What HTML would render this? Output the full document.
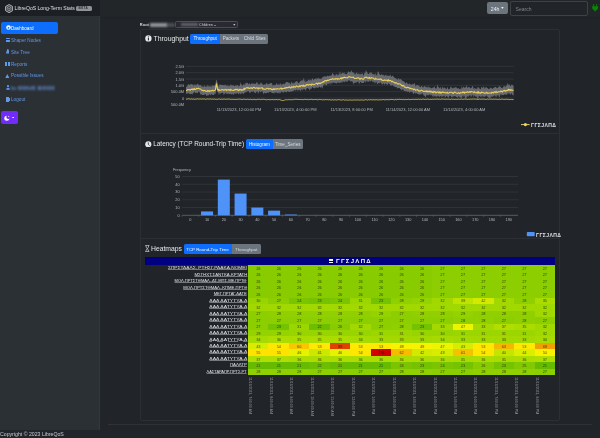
<!DOCTYPE html>
<html><head><meta charset="utf-8"><style>
html,body{margin:0;padding:0;width:600px;height:438px;overflow:hidden;background:#212529;font-family:"Liberation Sans", sans-serif;}
.t{position:absolute;white-space:nowrap;line-height:1.2;filter:blur(0.25px);}
.obf{letter-spacing:0.1px;}
</style></head><body>
<div style="position:absolute;left:0px;top:0px;width:100px;height:16px;background:#1c1f23;"></div>
<div style="position:absolute;left:0px;top:16px;width:99.6px;height:413.8px;background:#2b3035;"></div>
<div style="position:absolute;left:99.1px;top:16px;width:0.5px;height:413.8px;background:#33383d;"></div>
<svg style="position:absolute;left:4.8px;top:3.9px" width="8.2" height="9.2" viewBox="0 0 16 18"><path d="M8 1 L14.9 5 L14.9 13 L8 17 L1.1 13 L1.1 5 Z" fill="rgba(200,204,208,0.18)" stroke="#c4c8cc" stroke-width="1.7"/><path d="M8 4.5 L11.8 6.7 L11.8 11.1 L8 13.3 L4.2 11.1 L4.2 6.7 Z M8 9 L8 13.3 M8 9 L4.2 6.7 M8 9 L11.8 6.7" fill="none" stroke="#a8acb0" stroke-width="1.2"/></svg>
<div class="t " style="left:14.6px;top:5.14px;font-size:5.1px;color:#dee2e6;">LibreQoS Long-Term Stats</div>
<div style="position:absolute;left:76px;top:5.6px;width:16px;height:5.7px;background:#8e9399;border-radius:1.6px;"></div>
<div class="t " style="left:78.6px;top:6.69px;font-size:3.1px;color:#2b2f33;font-weight:bold;letter-spacing:0.35px;">BETA</div>
<div style="position:absolute;left:1px;top:21.5px;width:56.5px;height:12px;background:#0d6efd;border-radius:2px;"></div>
<svg style="position:absolute;left:5.5px;top:25px" width="5" height="5" viewBox="0 0 10 10"><circle cx="5" cy="5" r="4.6" fill="#fff"/><circle cx="5" cy="5.6" r="1.8" fill="#0d6efd"/></svg>
<div class="t " style="left:11px;top:25.64px;font-size:4.6px;color:#ffffff;">Dashboard</div>
<div class="t " style="left:11px;top:37.84px;font-size:4.6px;color:#6298e8;letter-spacing:0.04px;">Shaper Nodes</div>
<div class="t " style="left:11px;top:49.64px;font-size:4.6px;color:#6298e8;letter-spacing:0.04px;">Site Tree</div>
<div class="t " style="left:11px;top:61.54px;font-size:4.6px;color:#6298e8;letter-spacing:0.04px;">Reports</div>
<div class="t " style="left:11px;top:73.14px;font-size:4.6px;color:#6298e8;letter-spacing:0.04px;">Possible Issues</div>
<div class="t " style="left:11px;top:97.04px;font-size:4.6px;color:#6298e8;letter-spacing:0.04px;">Logout</div>
<div style="position:absolute;left:5.5px;top:37.6px;width:4.4px;height:1.7px;background:#6298e8;border-radius:0.3px;"></div>
<div style="position:absolute;left:5.5px;top:40.3px;width:4.4px;height:1.7px;background:#6298e8;border-radius:0.3px;"></div>
<svg style="position:absolute;left:5.8px;top:49.3px" width="3.7" height="4.5" viewBox="0 0 8 10"><path d="M4 0 Q5.5 0 6 3 L8 9 L8 10 L0 10 L0 9 L2 3 Q2.5 0 4 0 Z" fill="#6298e8"/></svg>
<div style="position:absolute;left:5.3px;top:61.9px;width:2.2px;height:3.7px;background:#6298e8;"></div>
<div style="position:absolute;left:7.8px;top:61.9px;width:2.2px;height:3.7px;background:#6298e8;"></div>
<svg style="position:absolute;left:5.3px;top:73.5px" width="4.6" height="4.6" viewBox="0 0 10 10"><path d="M5 0 L10 10 L0 10 Z" fill="#6298e8"/></svg>
<svg style="position:absolute;left:5.5px;top:85px" width="4" height="4.8" viewBox="0 0 8 10"><circle cx="4" cy="2.5" r="2.3" fill="#6298e8"/><path d="M0 10 Q0 5.5 4 5.5 Q8 5.5 8 10 Z" fill="#6298e8"/></svg>
<div class="t " style="left:10.8px;top:85.08px;font-size:5.2px;color:#6a9ae8;filter:blur(1.1px);font-weight:bold;letter-spacing:0.4px;">lo 6IIIhIII BIIIIIII</div>
<div style="position:absolute;left:5.5px;top:97px;width:3px;height:4.8px;background:#6298e8;"></div>
<div style="position:absolute;left:8.8px;top:97.8px;width:1.1px;height:3.4px;background:#6298e8;"></div>
<div style="position:absolute;left:0.5px;top:110.8px;width:17.5px;height:13.4px;background:#712cf9;border-radius:2px;"></div>
<svg style="position:absolute;left:4.2px;top:114.6px" width="6" height="6" viewBox="0 0 12 12"><circle cx="5.6" cy="6.4" r="5" fill="#fff"/><circle cx="8.6" cy="4.2" r="4" fill="#712cf9"/><path d="M9.4 1.2 L9.9 2.4 L11.1 2.6 L10.1 3.3 L10.4 4.5 L9.4 3.8 L8.4 4.5 L8.7 3.3 L7.7 2.6 L8.9 2.4 Z" fill="#fff" opacity="0.9"/></svg>
<svg style="position:absolute;left:12.1px;top:116.6px" width="2.2" height="1.7" viewBox="0 0 4 3"><path d="M0 0 L4 0 L2 3 Z" fill="#fff"/></svg>
<div class="t " style="left:0px;top:430.88px;font-size:5.2px;color:#c8ccd0;">Copyright © 2023 LibreQoS</div>
<div style="position:absolute;left:108px;top:423.7px;width:484px;height:0.6px;background:#2e3236;"></div>
<div style="position:absolute;left:100px;top:0px;width:500px;height:16.8px;background:#222629;"></div>
<div style="position:absolute;left:100px;top:16.6px;width:500px;height:1px;background:#1e2125;filter:blur(0.3px);"></div>
<div style="position:absolute;left:487px;top:2px;width:21px;height:12px;background:#6c757d;border-radius:2px;"></div>
<div class="t " style="left:490.8px;top:5.58px;font-size:5.2px;color:#eceef0;">24h</div>
<svg style="position:absolute;left:501.2px;top:7.4px" width="2.8" height="1.9" viewBox="0 0 4 3"><path d="M0 0 L4 0 L2 3 Z" fill="#f0f0f0"/></svg>
<div style="position:absolute;left:510px;top:0.8px;width:77.5px;height:14.9px;box-sizing:border-box;border:0.6px solid #3d4247;border-radius:2px;background:#212529"></div>
<div class="t " style="left:515.6px;top:5.90px;font-size:5.0px;color:#80868c;">Search</div>
<svg style="position:absolute;left:592px;top:3.8px" width="6.2" height="7.9" viewBox="0 0 12.4 15.8"><rect x="2.2" y="0" width="1.9" height="5" rx="0.9" fill="#008c00"/><rect x="8.3" y="0" width="1.9" height="5" rx="0.9" fill="#008c00"/><path d="M0.3 4.6 L12.1 4.6 L12.1 7.5 Q12.1 10.5 7.6 13 L6.2 15.8 L4.8 13 Q0.3 10.5 0.3 7.5 Z" fill="#008c00"/></svg>
<div class="t " style="left:139.8px;top:22.70px;font-size:4.0px;color:#d0d4d8;font-weight:bold;">Root</div>
<div style="position:absolute;left:150px;top:23.0px;width:17px;height:4.0px;background:#c0c4c8;filter:blur(0.9px);opacity:0.7;"></div>
<div style="position:absolute;left:166px;top:23.4px;width:9px;height:3.2px;background:#8a8e92;filter:blur(0.9px);opacity:0.4;"></div>
<div style="position:absolute;left:175px;top:21.1px;width:63.3px;height:6.9px;box-sizing:border-box;border:0.5px solid #4a4d55;border-radius:1.5px;background:#292833"></div>
<div style="position:absolute;left:181px;top:23.3px;width:17px;height:3.2px;background:#9a9ea2;filter:blur(0.9px);opacity:0.5;"></div>
<div class="t " style="left:199px;top:22.78px;font-size:3.7px;color:#d0d4d8;">Children --</div>
<svg style="position:absolute;left:233.4px;top:24.2px" width="2.6" height="1.7" viewBox="0 0 4 3"><path d="M0 0 L4 0 L2 3 Z" fill="#c8ccd0"/></svg>
<div style="position:absolute;left:139.6px;top:28.6px;width:420.6px;height:392.2px;box-sizing:border-box;border:1px solid #2c3034;border-radius:2px"></div>
<div style="position:absolute;left:140px;top:132.9px;width:420px;height:1px;background:#2c3034;"></div>
<div style="position:absolute;left:140px;top:238.1px;width:420px;height:1px;background:#2c3034;"></div>
<svg style="position:absolute;left:145px;top:34.8px" width="6.8" height="6.8" viewBox="0 0 12 12"><circle cx="6" cy="6" r="5.6" fill="#e6e8ea"/><rect x="5.1" y="5" width="1.8" height="4.5" fill="#212529"/><circle cx="6" cy="3.2" r="1" fill="#212529"/></svg>
<div class="t " style="left:153.5px;top:34.76px;font-size:6.9px;color:#e6e8ea;">Throughput</div>
<div style="position:absolute;left:190.3px;top:34px;width:29.7px;height:9.7px;background:#0d6efd;border-top-left-radius:1.5px;border-bottom-left-radius:1.5px;"></div>
<div class="t" style="left:155.15px;width:100px;top:36.34px;font-size:4.6px;color:#f4f6ff;text-align:center;font-weight:normal;">Throughput</div>
<div style="position:absolute;left:220.0px;top:34px;width:21.7px;height:9.7px;background:#6c757d;"></div>
<div class="t" style="left:180.85px;width:100px;top:36.34px;font-size:4.6px;color:#d8dadc;text-align:center;font-weight:normal;">Packets</div>
<div style="position:absolute;left:241.7px;top:34px;width:26px;height:9.7px;background:#6c757d;border-top-right-radius:1.5px;border-bottom-right-radius:1.5px;"></div>
<div class="t" style="left:204.7px;width:100px;top:36.34px;font-size:4.6px;color:#d8dadc;text-align:center;font-weight:normal;">Child Sites</div>
<div class="t" style="right:415.8px;top:65.00px;font-size:4.0px;color:#b4b8bc;text-align:right;">2.5G</div>
<div class="t" style="right:415.8px;top:71.30px;font-size:4.0px;color:#b4b8bc;text-align:right;">2.0G</div>
<div class="t" style="right:415.8px;top:77.60px;font-size:4.0px;color:#b4b8bc;text-align:right;">1.5G</div>
<div class="t" style="right:415.8px;top:83.90px;font-size:4.0px;color:#b4b8bc;text-align:right;">1.0G</div>
<div class="t" style="right:415.8px;top:90.20px;font-size:4.0px;color:#b4b8bc;text-align:right;">500.0M</div>
<div class="t" style="right:415.8px;top:96.60px;font-size:4.0px;color:#b4b8bc;text-align:right;">0</div>
<div class="t" style="right:415.8px;top:102.90px;font-size:4.0px;color:#b4b8bc;text-align:right;">500.0M</div>
<svg style="position:absolute;left:0;top:0" width="600" height="438">
<line x1="185.6" y1="66.4" x2="513.6" y2="66.4" stroke="#3a3e43" stroke-width="0.6"/>
<line x1="185.6" y1="72.7" x2="513.6" y2="72.7" stroke="#3a3e43" stroke-width="0.6"/>
<line x1="185.6" y1="79" x2="513.6" y2="79" stroke="#3a3e43" stroke-width="0.6"/>
<line x1="185.6" y1="85.3" x2="513.6" y2="85.3" stroke="#3a3e43" stroke-width="0.6"/>
<line x1="185.6" y1="91.6" x2="513.6" y2="91.6" stroke="#3a3e43" stroke-width="0.6"/>
<line x1="185.6" y1="98" x2="513.6" y2="98" stroke="#3a3e43" stroke-width="0.6"/>
<path d="M186.0,86.6 L186.7,87.0 L187.4,85.9 L188.1,84.0 L188.8,84.8 L189.5,84.5 L190.2,85.2 L190.9,83.7 L191.6,84.0 L192.3,84.9 L193.0,83.8 L193.7,86.2 L194.4,84.7 L195.1,84.1 L195.8,85.8 L196.5,85.0 L197.2,83.6 L197.9,84.4 L198.6,84.4 L199.3,85.3 L200.0,85.4 L200.7,84.8 L201.4,86.2 L202.1,86.5 L202.8,86.4 L203.5,87.1 L204.2,85.2 L204.9,86.6 L205.6,86.7 L206.3,85.9 L207.0,87.2 L207.7,84.7 L208.4,86.0 L209.1,87.1 L209.8,85.8 L210.5,86.1 L211.2,87.6 L211.9,85.6 L212.6,85.5 L213.3,85.4 L214.0,85.9 L214.7,85.5 L215.4,84.0 L216.1,80.6 L216.8,79.4 L217.5,86.0 L218.2,85.2 L218.9,87.1 L219.6,84.2 L220.3,84.7 L221.0,84.8 L221.7,85.0 L222.4,85.1 L223.1,85.1 L223.8,85.6 L224.5,85.3 L225.2,84.3 L225.9,86.0 L226.6,85.5 L227.3,85.9 L228.0,84.4 L228.7,86.7 L229.4,85.8 L230.1,86.2 L230.8,83.9 L231.5,85.4 L232.2,85.2 L232.9,85.7 L233.6,85.2 L234.3,86.2 L235.0,85.7 L235.7,85.7 L236.4,85.4 L237.1,85.4 L237.8,84.8 L238.5,86.8 L239.2,85.8 L239.9,86.0 L240.6,82.0 L241.3,84.6 L242.0,85.1 L242.7,86.1 L243.4,84.4 L244.1,83.2 L244.8,85.8 L245.5,83.2 L246.2,82.3 L246.9,83.8 L247.6,82.4 L248.3,84.1 L249.0,84.5 L249.7,82.7 L250.4,84.7 L251.1,84.0 L251.8,82.9 L252.5,83.6 L253.2,84.0 L253.9,83.3 L254.6,83.8 L255.3,84.0 L256.0,83.6 L256.7,82.0 L257.4,82.2 L258.1,85.3 L258.8,83.4 L259.5,84.4 L260.2,84.1 L260.9,82.1 L261.6,83.4 L262.3,83.5 L263.0,85.2 L263.7,84.8 L264.4,84.3 L265.1,85.0 L265.8,84.0 L266.5,82.7 L267.2,83.4 L267.9,84.7 L268.6,84.0 L269.3,83.9 L270.0,82.9 L270.7,83.3 L271.4,83.0 L272.1,83.5 L272.8,86.2 L273.5,84.8 L274.2,85.7 L274.9,84.4 L275.6,85.2 L276.3,83.7 L277.0,83.1 L277.7,85.5 L278.4,84.4 L279.1,83.6 L279.8,85.4 L280.5,82.9 L281.2,83.9 L281.9,85.7 L282.6,83.8 L283.3,84.0 L284.0,83.2 L284.7,84.5 L285.4,83.0 L286.1,81.9 L286.8,82.0 L287.5,82.3 L288.2,82.0 L288.9,83.4 L289.6,82.3 L290.3,84.4 L291.0,83.2 L291.7,81.2 L292.4,83.1 L293.1,84.0 L293.8,82.2 L294.5,83.2 L295.2,82.0 L295.9,81.5 L296.6,81.3 L297.3,80.9 L298.0,83.1 L298.7,83.3 L299.4,82.3 L300.1,81.5 L300.8,80.8 L301.5,80.4 L302.2,79.9 L302.9,81.1 L303.6,77.6 L304.3,82.0 L305.0,78.8 L305.7,82.4 L306.4,81.3 L307.1,81.3 L307.8,80.4 L308.5,79.5 L309.2,79.5 L309.9,81.0 L310.6,79.3 L311.3,81.1 L312.0,78.5 L312.7,78.6 L313.4,80.2 L314.1,79.3 L314.8,79.1 L315.5,78.3 L316.2,79.7 L316.9,77.5 L317.6,79.0 L318.3,77.6 L319.0,79.1 L319.7,78.5 L320.4,78.4 L321.1,79.5 L321.8,78.0 L322.5,77.2 L323.2,76.2 L323.9,77.4 L324.6,75.9 L325.3,76.5 L326.0,76.6 L326.7,76.7 L327.4,75.5 L328.1,75.9 L328.8,76.2 L329.5,75.7 L330.2,75.2 L330.9,75.9 L331.6,75.3 L332.3,72.9 L333.0,73.6 L333.7,74.8 L334.4,75.4 L335.1,76.0 L335.8,74.2 L336.5,73.8 L337.2,75.8 L337.9,73.9 L338.6,74.9 L339.3,74.1 L340.0,71.1 L340.7,74.7 L341.4,73.9 L342.1,72.7 L342.8,72.7 L343.5,73.5 L344.2,72.1 L344.9,74.3 L345.6,73.9 L346.3,74.2 L347.0,73.8 L347.7,72.6 L348.4,71.1 L349.1,72.4 L349.8,72.0 L350.5,72.3 L351.2,70.3 L351.9,71.6 L352.6,72.2 L353.3,72.8 L354.0,72.5 L354.7,74.2 L355.4,74.6 L356.1,73.0 L356.8,72.6 L357.5,74.0 L358.2,74.5 L358.9,73.1 L359.6,74.5 L360.3,73.7 L361.0,74.8 L361.7,73.5 L362.4,73.3 L363.1,74.7 L363.8,75.5 L364.5,72.4 L365.2,73.3 L365.9,70.0 L366.6,71.4 L367.3,72.6 L368.0,74.1 L368.7,74.3 L369.4,72.8 L370.1,73.5 L370.8,72.1 L371.5,72.5 L372.2,74.6 L372.9,73.4 L373.6,74.6 L374.3,73.7 L375.0,75.9 L375.7,72.7 L376.4,75.2 L377.1,75.6 L377.8,71.2 L378.5,71.8 L379.2,73.4 L379.9,74.8 L380.6,75.3 L381.3,74.3 L382.0,74.4 L382.7,75.1 L383.4,74.6 L384.1,76.6 L384.8,74.9 L385.5,74.8 L386.2,76.4 L386.9,74.3 L387.6,76.3 L388.3,75.8 L389.0,76.0 L389.7,75.6 L390.4,74.6 L391.1,76.9 L391.8,76.2 L392.5,75.4 L393.2,76.5 L393.9,76.8 L394.6,78.0 L395.3,78.3 L396.0,78.0 L396.7,79.2 L397.4,79.7 L398.1,79.0 L398.8,77.8 L399.5,79.8 L400.2,79.2 L400.9,78.8 L401.6,80.2 L402.3,80.4 L403.0,81.5 L403.7,81.1 L404.4,82.2 L405.1,82.5 L405.8,83.9 L406.5,82.0 L407.2,83.1 L407.9,84.2 L408.6,84.2 L409.3,83.0 L410.0,84.8 L410.7,83.9 L411.4,84.6 L412.1,84.9 L412.8,83.6 L413.5,84.4 L414.2,83.3 L414.9,83.6 L415.6,86.7 L416.3,85.4 L417.0,84.8 L417.7,85.5 L418.4,85.6 L419.1,85.7 L419.8,86.9 L420.5,87.2 L421.2,86.1 L421.9,86.1 L422.6,87.2 L423.3,87.6 L424.0,86.0 L424.7,86.2 L425.4,86.5 L426.1,87.8 L426.8,86.5 L427.5,87.8 L428.2,85.6 L428.9,88.2 L429.6,87.1 L430.3,87.5 L431.0,87.9 L431.7,88.4 L432.4,87.6 L433.1,88.1 L433.8,86.9 L434.5,86.3 L435.2,88.4 L435.9,88.3 L436.6,88.8 L437.3,84.1 L438.0,87.0 L438.7,87.1 L439.4,88.4 L440.1,87.2 L440.8,87.3 L441.5,89.6 L442.2,87.4 L442.9,86.4 L443.6,88.6 L444.3,87.7 L445.0,87.4 L445.7,88.7 L446.4,89.5 L447.1,87.2 L447.8,87.6 L448.5,89.5 L449.2,89.2 L449.9,88.5 L450.6,86.8 L451.3,86.6 L452.0,88.8 L452.7,88.1 L453.4,87.4 L454.1,88.4 L454.8,87.3 L455.5,87.3 L456.2,87.1 L456.9,88.3 L457.6,88.5 L458.3,88.0 L459.0,88.7 L459.7,89.0 L460.4,88.6 L461.1,89.5 L461.8,85.7 L462.5,88.4 L463.2,87.3 L463.9,86.6 L464.6,88.1 L465.3,87.3 L466.0,87.6 L466.7,84.7 L467.4,88.1 L468.1,87.6 L468.8,87.1 L469.5,87.1 L470.2,88.2 L470.9,88.1 L471.6,87.8 L472.3,85.9 L473.0,86.3 L473.7,89.2 L474.4,87.9 L475.1,88.4 L475.8,88.8 L476.5,89.2 L477.2,86.4 L477.9,88.7 L478.6,86.7 L479.3,87.9 L480.0,89.4 L480.7,89.1 L481.4,87.0 L482.1,86.9 L482.8,88.6 L483.5,86.4 L484.2,87.1 L484.9,89.1 L485.6,87.2 L486.3,86.8 L487.0,88.3 L487.7,88.1 L488.4,88.9 L489.1,89.1 L489.8,88.5 L490.5,87.6 L491.2,87.7 L491.9,88.5 L492.6,89.1 L493.3,87.7 L494.0,88.1 L494.7,86.8 L495.4,86.9 L496.1,87.1 L496.8,88.3 L497.5,88.0 L498.2,87.4 L498.9,86.3 L499.6,86.3 L500.3,86.4 L501.0,87.4 L501.7,88.0 L502.4,88.2 L503.1,86.8 L503.8,86.4 L504.5,85.7 L505.2,87.5 L505.9,85.8 L506.6,86.1 L507.3,82.6 L508.0,85.9 L508.7,83.9 L509.4,84.4 L510.1,86.1 L510.8,86.2 L511.5,84.5 L512.2,85.4 L512.9,84.7 L513.6,86.4 L513.6,95.4 L512.9,95.2 L512.2,94.5 L511.5,92.7 L510.8,95.1 L510.1,94.1 L509.4,93.6 L508.7,92.6 L508.0,94.9 L507.3,93.1 L506.6,94.7 L505.9,95.1 L505.2,94.3 L504.5,94.3 L503.8,95.2 L503.1,94.9 L502.4,94.7 L501.7,95.5 L501.0,93.9 L500.3,95.0 L499.6,97.5 L498.9,96.5 L498.2,94.8 L497.5,95.3 L496.8,97.4 L496.1,95.0 L495.4,97.0 L494.7,95.3 L494.0,95.5 L493.3,96.6 L492.6,96.9 L491.9,95.8 L491.2,96.9 L490.5,97.6 L489.8,97.9 L489.1,97.8 L488.4,97.5 L487.7,97.1 L487.0,95.9 L486.3,95.2 L485.6,96.6 L484.9,96.5 L484.2,96.7 L483.5,97.0 L482.8,95.2 L482.1,97.5 L481.4,96.0 L480.7,97.1 L480.0,96.5 L479.3,95.9 L478.6,96.2 L477.9,100.8 L477.2,96.7 L476.5,96.7 L475.8,96.2 L475.1,96.5 L474.4,95.1 L473.7,97.5 L473.0,94.8 L472.3,95.3 L471.6,97.1 L470.9,94.7 L470.2,96.9 L469.5,94.6 L468.8,96.9 L468.1,95.8 L467.4,96.4 L466.7,96.8 L466.0,98.8 L465.3,97.9 L464.6,96.6 L463.9,95.1 L463.2,97.2 L462.5,95.4 L461.8,97.5 L461.1,98.0 L460.4,97.5 L459.7,97.0 L459.0,96.5 L458.3,96.3 L457.6,98.0 L456.9,96.7 L456.2,97.0 L455.5,96.3 L454.8,96.0 L454.1,96.2 L453.4,96.6 L452.7,96.4 L452.0,97.6 L451.3,96.8 L450.6,95.6 L449.9,96.4 L449.2,95.8 L448.5,98.0 L447.8,96.7 L447.1,96.5 L446.4,95.8 L445.7,97.0 L445.0,97.6 L444.3,95.5 L443.6,95.8 L442.9,96.7 L442.2,96.3 L441.5,96.7 L440.8,96.3 L440.1,96.0 L439.4,96.9 L438.7,96.5 L438.0,95.5 L437.3,96.5 L436.6,96.8 L435.9,96.3 L435.2,96.4 L434.5,95.7 L433.8,97.2 L433.1,95.0 L432.4,96.8 L431.7,95.2 L431.0,94.2 L430.3,95.8 L429.6,94.1 L428.9,95.8 L428.2,94.8 L427.5,95.5 L426.8,94.2 L426.1,95.9 L425.4,97.7 L424.7,95.2 L424.0,96.3 L423.3,94.4 L422.6,93.6 L421.9,93.3 L421.2,94.8 L420.5,94.3 L419.8,94.2 L419.1,95.0 L418.4,94.0 L417.7,94.0 L417.0,93.4 L416.3,93.1 L415.6,93.7 L414.9,92.6 L414.2,92.9 L413.5,94.2 L412.8,93.3 L412.1,91.5 L411.4,91.9 L410.7,91.6 L410.0,92.6 L409.3,92.8 L408.6,91.1 L407.9,92.5 L407.2,91.2 L406.5,91.3 L405.8,91.5 L405.1,90.8 L404.4,90.9 L403.7,90.7 L403.0,88.9 L402.3,89.5 L401.6,90.4 L400.9,89.3 L400.2,88.9 L399.5,87.9 L398.8,88.0 L398.1,87.9 L397.4,88.8 L396.7,87.1 L396.0,87.3 L395.3,87.0 L394.6,86.9 L393.9,85.2 L393.2,86.4 L392.5,84.7 L391.8,85.5 L391.1,85.4 L390.4,85.2 L389.7,83.9 L389.0,84.1 L388.3,83.1 L387.6,84.9 L386.9,84.3 L386.2,84.5 L385.5,83.1 L384.8,84.8 L384.1,84.1 L383.4,83.2 L382.7,83.9 L382.0,84.8 L381.3,83.2 L380.6,82.3 L379.9,82.7 L379.2,83.4 L378.5,82.7 L377.8,84.0 L377.1,83.9 L376.4,81.8 L375.7,81.8 L375.0,84.0 L374.3,82.1 L373.6,81.5 L372.9,82.7 L372.2,81.1 L371.5,80.5 L370.8,81.0 L370.1,82.0 L369.4,80.5 L368.7,81.7 L368.0,82.1 L367.3,81.6 L366.6,80.2 L365.9,83.3 L365.2,81.3 L364.5,81.2 L363.8,83.1 L363.1,82.9 L362.4,82.9 L361.7,83.3 L361.0,82.1 L360.3,82.0 L359.6,83.6 L358.9,83.8 L358.2,80.9 L357.5,81.9 L356.8,82.1 L356.1,82.9 L355.4,82.3 L354.7,82.9 L354.0,82.8 L353.3,84.5 L352.6,81.8 L351.9,80.9 L351.2,81.6 L350.5,81.8 L349.8,80.0 L349.1,81.2 L348.4,79.7 L347.7,82.2 L347.0,80.6 L346.3,82.5 L345.6,80.6 L344.9,82.5 L344.2,81.8 L343.5,81.3 L342.8,83.0 L342.1,80.7 L341.4,83.1 L340.7,82.2 L340.0,83.3 L339.3,82.6 L338.6,82.9 L337.9,82.3 L337.2,82.7 L336.5,83.8 L335.8,82.8 L335.1,83.3 L334.4,82.7 L333.7,82.6 L333.0,82.4 L332.3,83.3 L331.6,82.6 L330.9,85.2 L330.2,82.3 L329.5,83.6 L328.8,83.9 L328.1,83.5 L327.4,83.8 L326.7,85.5 L326.0,85.5 L325.3,84.2 L324.6,84.1 L323.9,86.0 L323.2,84.5 L322.5,89.1 L321.8,86.7 L321.1,87.4 L320.4,87.7 L319.7,86.5 L319.0,87.3 L318.3,87.7 L317.6,87.6 L316.9,88.2 L316.2,87.3 L315.5,87.4 L314.8,88.8 L314.1,88.0 L313.4,88.1 L312.7,87.1 L312.0,88.1 L311.3,89.1 L310.6,88.2 L309.9,90.7 L309.2,89.3 L308.5,88.7 L307.8,88.0 L307.1,88.1 L306.4,88.9 L305.7,90.8 L305.0,89.4 L304.3,89.1 L303.6,88.7 L302.9,90.6 L302.2,89.8 L301.5,89.1 L300.8,91.3 L300.1,90.4 L299.4,89.4 L298.7,90.5 L298.0,89.8 L297.3,90.7 L296.6,88.9 L295.9,90.9 L295.2,90.1 L294.5,90.0 L293.8,90.5 L293.1,91.5 L292.4,91.0 L291.7,91.6 L291.0,91.8 L290.3,91.6 L289.6,91.7 L288.9,91.9 L288.2,91.6 L287.5,90.9 L286.8,92.4 L286.1,92.0 L285.4,92.2 L284.7,90.9 L284.0,92.4 L283.3,92.6 L282.6,92.2 L281.9,91.9 L281.2,91.3 L280.5,92.9 L279.8,93.7 L279.1,92.1 L278.4,92.9 L277.7,93.6 L277.0,92.4 L276.3,92.5 L275.6,92.7 L274.9,91.7 L274.2,94.0 L273.5,93.0 L272.8,93.1 L272.1,93.0 L271.4,92.6 L270.7,91.7 L270.0,92.2 L269.3,91.9 L268.6,93.3 L267.9,92.1 L267.2,92.9 L266.5,93.1 L265.8,93.3 L265.1,93.2 L264.4,92.6 L263.7,94.5 L263.0,92.7 L262.3,91.0 L261.6,91.1 L260.9,92.6 L260.2,91.7 L259.5,91.0 L258.8,92.2 L258.1,93.9 L257.4,91.3 L256.7,91.2 L256.0,92.6 L255.3,93.3 L254.6,92.7 L253.9,91.6 L253.2,91.2 L252.5,92.0 L251.8,91.1 L251.1,91.9 L250.4,92.7 L249.7,92.7 L249.0,92.0 L248.3,90.7 L247.6,91.7 L246.9,90.6 L246.2,92.8 L245.5,91.9 L244.8,92.9 L244.1,92.6 L243.4,94.7 L242.7,93.3 L242.0,92.5 L241.3,93.9 L240.6,94.4 L239.9,92.8 L239.2,93.8 L238.5,94.6 L237.8,93.1 L237.1,93.2 L236.4,93.7 L235.7,92.9 L235.0,94.5 L234.3,92.9 L233.6,94.7 L232.9,94.8 L232.2,93.3 L231.5,94.7 L230.8,93.8 L230.1,93.7 L229.4,94.2 L228.7,93.8 L228.0,93.6 L227.3,93.9 L226.6,94.0 L225.9,92.6 L225.2,93.5 L224.5,93.8 L223.8,95.2 L223.1,92.5 L222.4,92.9 L221.7,92.9 L221.0,93.1 L220.3,94.0 L219.6,93.0 L218.9,95.2 L218.2,92.3 L217.5,92.6 L216.8,87.1 L216.1,90.6 L215.4,94.4 L214.7,93.3 L214.0,94.9 L213.3,95.0 L212.6,94.7 L211.9,94.7 L211.2,93.7 L210.5,95.7 L209.8,93.7 L209.1,94.8 L208.4,95.6 L207.7,95.0 L207.0,95.9 L206.3,95.7 L205.6,94.2 L204.9,93.8 L204.2,95.2 L203.5,94.7 L202.8,94.9 L202.1,95.0 L201.4,93.9 L200.7,95.0 L200.0,92.9 L199.3,91.8 L198.6,91.0 L197.9,92.9 L197.2,93.3 L196.5,92.4 L195.8,92.8 L195.1,93.2 L194.4,91.6 L193.7,92.6 L193.0,93.5 L192.3,94.6 L191.6,93.8 L190.9,94.0 L190.2,94.3 L189.5,93.7 L188.8,93.7 L188.1,92.6 L187.4,93.8 L186.7,93.4 L186.0,94.2 Z" fill="#74777c" opacity="0.85"/>
<path d="M186.0,90.3 L186.7,90.4 L187.4,89.8 L188.1,89.6 L188.8,89.7 L189.5,89.6 L190.2,90.3 L190.9,89.5 L191.6,89.1 L192.3,89.7 L193.0,88.9 L193.7,89.6 L194.4,88.6 L195.1,89.5 L195.8,89.5 L196.5,88.3 L197.2,88.5 L197.9,88.7 L198.6,88.2 L199.3,88.7 L200.0,89.0 L200.7,89.0 L201.4,89.9 L202.1,90.5 L202.8,90.3 L203.5,91.0 L204.2,90.3 L204.9,90.5 L205.6,91.2 L206.3,91.2 L207.0,91.5 L207.7,90.4 L208.4,90.7 L209.1,91.6 L209.8,90.6 L210.5,90.9 L211.2,90.9 L211.9,90.8 L212.6,90.2 L213.3,91.1 L214.0,90.6 L214.7,90.2 L215.4,89.9 L216.1,85.6 L216.8,84.0 L217.5,89.8 L218.2,89.3 L218.9,90.7 L219.6,89.9 L220.3,90.3 L221.0,90.2 L221.7,89.8 L222.4,89.5 L223.1,89.7 L223.8,90.3 L224.5,89.9 L225.2,89.8 L225.9,89.5 L226.6,90.5 L227.3,89.9 L228.0,89.7 L228.7,90.0 L229.4,89.7 L230.1,90.5 L230.8,89.4 L231.5,90.0 L232.2,90.3 L232.9,90.5 L233.6,90.4 L234.3,89.7 L235.0,90.0 L235.7,89.4 L236.4,89.4 L237.1,90.0 L237.8,89.3 L238.5,90.6 L239.2,90.4 L239.9,89.3 L240.6,89.7 L241.3,90.2 L242.0,89.5 L242.7,90.1 L243.4,89.8 L244.1,88.4 L244.8,89.4 L245.5,88.2 L246.2,88.0 L246.9,87.6 L247.6,88.0 L248.3,87.6 L249.0,88.4 L249.7,88.4 L250.4,88.0 L251.1,87.6 L251.8,88.2 L252.5,88.6 L253.2,87.5 L253.9,87.4 L254.6,87.8 L255.3,88.4 L256.0,88.0 L256.7,87.8 L257.4,88.0 L258.1,89.0 L258.8,87.8 L259.5,88.2 L260.2,88.3 L260.9,88.0 L261.6,87.9 L262.3,87.9 L263.0,89.2 L263.7,88.8 L264.4,89.3 L265.1,89.3 L265.8,89.2 L266.5,88.6 L267.2,88.2 L267.9,88.3 L268.6,89.1 L269.3,88.7 L270.0,88.5 L270.7,88.7 L271.4,89.6 L272.1,89.2 L272.8,89.8 L273.5,88.8 L274.2,89.5 L274.9,88.7 L275.6,89.2 L276.3,89.2 L277.0,88.7 L277.7,88.8 L278.4,89.0 L279.1,89.0 L279.8,88.9 L280.5,88.3 L281.2,88.2 L281.9,89.1 L282.6,88.5 L283.3,88.5 L284.0,88.5 L284.7,88.0 L285.4,88.3 L286.1,87.4 L286.8,87.8 L287.5,87.5 L288.2,87.7 L288.9,87.1 L289.6,86.9 L290.3,87.9 L291.0,88.0 L291.7,86.6 L292.4,86.9 L293.1,87.6 L293.8,86.4 L294.5,86.8 L295.2,87.3 L295.9,86.5 L296.6,86.0 L297.3,86.6 L298.0,86.9 L298.7,86.7 L299.4,85.9 L300.1,86.7 L300.8,85.8 L301.5,85.6 L302.2,85.5 L302.9,86.3 L303.6,85.3 L304.3,86.2 L305.0,85.8 L305.7,85.9 L306.4,84.7 L307.1,84.9 L307.8,84.4 L308.5,85.0 L309.2,84.7 L309.9,84.3 L310.6,84.7 L311.3,85.2 L312.0,83.9 L312.7,84.2 L313.4,84.8 L314.1,84.5 L314.8,84.3 L315.5,83.9 L316.2,83.4 L316.9,83.3 L317.6,84.3 L318.3,83.1 L319.0,83.6 L319.7,83.2 L320.4,83.5 L321.1,83.0 L321.8,82.5 L322.5,82.5 L323.2,81.5 L323.9,82.0 L324.6,81.0 L325.3,80.5 L326.0,80.6 L326.7,81.0 L327.4,80.2 L328.1,80.4 L328.8,80.2 L329.5,79.7 L330.2,79.4 L330.9,79.5 L331.6,79.3 L332.3,78.5 L333.0,79.2 L333.7,79.2 L334.4,78.8 L335.1,79.3 L335.8,78.6 L336.5,78.8 L337.2,79.2 L337.9,78.5 L338.6,79.0 L339.3,79.1 L340.0,78.6 L340.7,78.0 L341.4,78.8 L342.1,77.7 L342.8,78.4 L343.5,77.6 L344.2,77.2 L344.9,77.6 L345.6,77.5 L346.3,77.8 L347.0,77.7 L347.7,77.8 L348.4,76.9 L349.1,76.5 L349.8,76.8 L350.5,77.3 L351.2,77.3 L351.9,77.5 L352.6,77.3 L353.3,77.2 L354.0,78.1 L354.7,78.4 L355.4,78.5 L356.1,78.4 L356.8,78.2 L357.5,77.8 L358.2,77.9 L358.9,78.0 L359.6,79.1 L360.3,79.1 L361.0,78.3 L361.7,78.3 L362.4,79.1 L363.1,79.3 L363.8,78.9 L364.5,77.7 L365.2,77.4 L365.9,77.3 L366.6,77.1 L367.3,78.1 L368.0,77.8 L368.7,78.3 L369.4,77.4 L370.1,78.6 L370.8,78.0 L371.5,77.7 L372.2,77.9 L372.9,78.2 L373.6,78.1 L374.3,79.2 L375.0,79.3 L375.7,78.4 L376.4,79.0 L377.1,79.2 L377.8,79.1 L378.5,79.4 L379.2,79.1 L379.9,79.6 L380.6,78.9 L381.3,79.1 L382.0,80.2 L382.7,80.4 L383.4,80.3 L384.1,80.5 L384.8,79.9 L385.5,80.2 L386.2,80.4 L386.9,80.1 L387.6,80.9 L388.3,79.8 L389.0,80.9 L389.7,80.5 L390.4,80.5 L391.1,80.9 L391.8,81.8 L392.5,81.2 L393.2,82.0 L393.9,82.1 L394.6,82.8 L395.3,83.2 L396.0,82.7 L396.7,83.0 L397.4,83.9 L398.1,84.0 L398.8,83.7 L399.5,84.0 L400.2,84.0 L400.9,84.7 L401.6,85.6 L402.3,86.0 L403.0,85.3 L403.7,85.5 L404.4,87.0 L405.1,87.1 L405.8,87.5 L406.5,87.8 L407.2,87.1 L407.9,87.6 L408.6,87.6 L409.3,87.9 L410.0,88.7 L410.7,88.2 L411.4,88.9 L412.1,88.7 L412.8,88.7 L413.5,89.8 L414.2,89.1 L414.9,89.3 L415.6,90.3 L416.3,90.1 L417.0,89.8 L417.7,89.6 L418.4,90.9 L419.1,90.8 L419.8,91.1 L420.5,91.0 L421.2,90.2 L421.9,90.5 L422.6,90.7 L423.3,91.4 L424.0,91.4 L424.7,91.4 L425.4,91.1 L426.1,91.7 L426.8,90.8 L427.5,91.7 L428.2,91.2 L428.9,92.0 L429.6,91.1 L430.3,92.0 L431.0,91.2 L431.7,92.0 L432.4,92.5 L433.1,91.5 L433.8,92.6 L434.5,91.7 L435.2,91.8 L435.9,92.9 L436.6,92.5 L437.3,91.8 L438.0,92.0 L438.7,92.8 L439.4,91.9 L440.1,93.0 L440.8,92.1 L441.5,92.9 L442.2,92.3 L442.9,92.0 L443.6,92.5 L444.3,92.5 L445.0,92.6 L445.7,93.0 L446.4,93.0 L447.1,92.3 L447.8,93.2 L448.5,93.1 L449.2,92.8 L449.9,92.3 L450.6,92.2 L451.3,92.2 L452.0,92.5 L452.7,93.2 L453.4,93.3 L454.1,92.2 L454.8,92.1 L455.5,92.4 L456.2,92.9 L456.9,93.3 L457.6,93.5 L458.3,92.7 L459.0,92.9 L459.7,93.5 L460.4,92.7 L461.1,93.0 L461.8,92.7 L462.5,92.1 L463.2,92.8 L463.9,92.0 L464.6,93.1 L465.3,92.3 L466.0,92.2 L466.7,92.4 L467.4,91.8 L468.1,92.3 L468.8,92.4 L469.5,91.7 L470.2,92.4 L470.9,91.5 L471.6,91.6 L472.3,91.8 L473.0,91.9 L473.7,92.7 L474.4,91.8 L475.1,92.5 L475.8,92.8 L476.5,92.9 L477.2,92.0 L477.9,93.1 L478.6,91.9 L479.3,93.1 L480.0,92.8 L480.7,93.2 L481.4,92.1 L482.1,92.6 L482.8,92.3 L483.5,92.8 L484.2,93.0 L484.9,93.4 L485.6,92.9 L486.3,92.3 L487.0,93.1 L487.7,92.9 L488.4,93.2 L489.1,93.0 L489.8,93.0 L490.5,93.0 L491.2,93.3 L491.9,92.2 L492.6,92.6 L493.3,93.0 L494.0,92.3 L494.7,91.9 L495.4,92.5 L496.1,91.5 L496.8,92.5 L497.5,92.3 L498.2,91.9 L498.9,91.8 L499.6,91.7 L500.3,91.7 L501.0,91.0 L501.7,91.4 L502.4,91.9 L503.1,90.9 L503.8,90.5 L504.5,90.4 L505.2,91.4 L505.9,90.6 L506.6,90.9 L507.3,90.2 L508.0,90.6 L508.7,89.4 L509.4,90.2 L510.1,89.5 L510.8,90.3 L511.5,89.9 L512.2,90.1 L512.9,90.2 L513.6,90.6" fill="none" stroke="#e8cf5c" stroke-width="1.1"/>
<path d="M186.0,99.2 L186.7,99.1 L187.4,99.0 L188.1,98.8 L188.8,98.8 L189.5,98.9 L190.2,99.2 L190.9,99.2 L191.6,98.9 L192.3,99.3 L193.0,98.8 L193.7,99.1 L194.4,99.3 L195.1,99.0 L195.8,99.3 L196.5,99.1 L197.2,98.8 L197.9,99.0 L198.6,99.1 L199.3,99.0 L200.0,99.2 L200.7,98.9 L201.4,99.2 L202.1,99.0 L202.8,98.9 L203.5,99.1 L204.2,98.9 L204.9,99.1 L205.6,99.3 L206.3,99.2 L207.0,99.1 L207.7,98.9 L208.4,99.1 L209.1,98.9 L209.8,99.2 L210.5,99.0 L211.2,99.2 L211.9,99.1 L212.6,99.1 L213.3,99.3 L214.0,99.0 L214.7,99.0 L215.4,99.4 L216.1,99.1 L216.8,99.4 L217.5,99.4 L218.2,99.2 L218.9,99.0 L219.6,99.0 L220.3,99.4 L221.0,99.0 L221.7,99.2 L222.4,99.3 L223.1,99.0 L223.8,99.2 L224.5,99.1 L225.2,99.3 L225.9,99.3 L226.6,99.2 L227.3,99.1 L228.0,99.2 L228.7,99.1 L229.4,99.1 L230.1,99.2 L230.8,99.5 L231.5,99.3 L232.2,99.5 L232.9,99.1 L233.6,99.5 L234.3,99.3 L235.0,99.5 L235.7,99.4 L236.4,99.4 L237.1,99.2 L237.8,99.5 L238.5,99.2 L239.2,99.2 L239.9,99.1 L240.6,99.3 L241.3,99.4 L242.0,99.3 L242.7,99.6 L243.4,99.2 L244.1,99.4 L244.8,99.2 L245.5,99.4 L246.2,99.5 L246.9,99.5 L247.6,99.2 L248.3,99.3 L249.0,99.5 L249.7,99.6 L250.4,99.2 L251.1,99.5 L251.8,99.5 L252.5,99.6 L253.2,99.3 L253.9,99.6 L254.6,99.4 L255.3,99.7 L256.0,99.2 L256.7,99.7 L257.4,99.4 L258.1,99.4 L258.8,99.3 L259.5,99.3 L260.2,99.6 L260.9,99.6 L261.6,99.3 L262.3,99.4 L263.0,99.3 L263.7,99.3 L264.4,99.4 L265.1,99.4 L265.8,99.7 L266.5,99.8 L267.2,99.7 L267.9,99.5 L268.6,99.5 L269.3,99.7 L270.0,99.7 L270.7,99.7 L271.4,99.6 L272.1,99.4 L272.8,99.6 L273.5,99.7 L274.2,99.7 L274.9,99.4 L275.6,99.7 L276.3,99.5 L277.0,99.4 L277.7,99.8 L278.4,99.7 L279.1,99.7 L279.8,99.4 L280.5,99.9 L281.2,100.2 L281.9,100.4 L282.6,100.5 L283.3,100.6 L284.0,100.4 L284.7,100.0 L285.4,99.7 L286.1,99.8 L286.8,99.7 L287.5,99.8 L288.2,99.5 L288.9,99.8 L289.6,99.6 L290.3,99.8 L291.0,99.3 L291.7,99.8 L292.4,99.7 L293.1,99.4 L293.8,99.7 L294.5,99.3 L295.2,99.3 L295.9,99.4 L296.6,99.3 L297.3,99.4 L298.0,99.6 L298.7,99.5 L299.4,99.5 L300.1,99.3 L300.8,99.6 L301.5,99.6 L302.2,99.5 L302.9,99.7 L303.6,99.6 L304.3,99.4 L305.0,99.3 L305.7,99.5 L306.4,99.6 L307.1,99.4 L307.8,99.5 L308.5,99.7 L309.2,99.7 L309.9,99.3 L310.6,99.5 L311.3,99.3 L312.0,99.3 L312.7,99.7 L313.4,99.5 L314.1,99.6 L314.8,99.6 L315.5,99.5 L316.2,99.5 L316.9,99.5 L317.6,99.8 L318.3,99.7 L319.0,99.5 L319.7,99.4 L320.4,99.5 L321.1,99.8 L321.8,99.6 L322.5,99.8 L323.2,99.8 L323.9,99.5 L324.6,99.8 L325.3,99.5 L326.0,99.9 L326.7,99.6 L327.4,99.6 L328.1,100.0 L328.8,99.7 L329.5,99.6 L330.2,100.0 L330.9,99.8 L331.6,100.0 L332.3,99.7 L333.0,99.8 L333.7,100.0 L334.4,99.8 L335.1,100.1 L335.8,99.7 L336.5,100.0 L337.2,99.7 L337.9,99.9 L338.6,99.6 L339.3,99.7 L340.0,100.1 L340.7,99.9 L341.4,100.1 L342.1,99.8 L342.8,99.8 L343.5,99.7 L344.2,100.0 L344.9,100.1 L345.6,100.0 L346.3,99.9 L347.0,100.2 L347.7,100.2 L348.4,100.1 L349.1,99.8 L349.8,100.1 L350.5,100.0 L351.2,100.2 L351.9,99.9 L352.6,100.1 L353.3,100.0 L354.0,99.9 L354.7,100.0 L355.4,100.0 L356.1,100.1 L356.8,99.9 L357.5,99.9 L358.2,100.2 L358.9,99.7 L359.6,100.1 L360.3,100.0 L361.0,99.9 L361.7,99.9 L362.4,100.0 L363.1,100.1 L363.8,100.0 L364.5,100.0 L365.2,99.6 L365.9,99.8 L366.6,99.7 L367.3,100.1 L368.0,100.0 L368.7,99.6 L369.4,99.9 L370.1,99.8 L370.8,99.6 L371.5,99.7 L372.2,99.9 L372.9,99.9 L373.6,99.7 L374.3,99.9 L375.0,99.7 L375.7,99.8 L376.4,99.7 L377.1,100.0 L377.8,99.8 L378.5,99.9 L379.2,99.8 L379.9,99.7 L380.6,99.9 L381.3,99.8 L382.0,99.8 L382.7,99.6 L383.4,99.5 L384.1,99.7 L384.8,99.8 L385.5,99.8 L386.2,99.6 L386.9,99.5 L387.6,99.7 L388.3,99.8 L389.0,99.5 L389.7,99.7 L390.4,99.5 L391.1,99.5 L391.8,99.4 L392.5,99.5 L393.2,99.5 L393.9,99.8 L394.6,99.8 L395.3,99.4 L396.0,99.5 L396.7,99.8 L397.4,99.4 L398.1,99.5 L398.8,99.5 L399.5,99.3 L400.2,99.4 L400.9,99.5 L401.6,99.5 L402.3,99.7 L403.0,99.4 L403.7,99.3 L404.4,99.7 L405.1,99.5 L405.8,99.6 L406.5,99.5 L407.2,99.6 L407.9,99.4 L408.6,99.3 L409.3,99.6 L410.0,99.4 L410.7,99.5 L411.4,99.5 L412.1,99.5 L412.8,99.3 L413.5,99.3 L414.2,99.6 L414.9,99.4 L415.6,99.3 L416.3,99.4 L417.0,99.2 L417.7,99.5 L418.4,99.1 L419.1,99.5 L419.8,99.4 L420.5,99.3 L421.2,99.5 L421.9,99.2 L422.6,99.2 L423.3,99.1 L424.0,99.3 L424.7,99.4 L425.4,99.4 L426.1,99.2 L426.8,99.4 L427.5,99.1 L428.2,99.2 L428.9,99.3 L429.6,99.5 L430.3,99.3 L431.0,99.3 L431.7,99.4 L432.4,99.2 L433.1,99.4 L433.8,99.3 L434.5,99.1 L435.2,99.1 L435.9,99.4 L436.6,99.1 L437.3,99.0 L438.0,99.4 L438.7,99.2 L439.4,99.2 L440.1,99.3 L440.8,99.4 L441.5,99.0 L442.2,99.1 L442.9,99.0 L443.6,99.2 L444.3,99.2 L445.0,99.4 L445.7,99.3 L446.4,99.2 L447.1,99.2 L447.8,99.2 L448.5,99.1 L449.2,99.4 L449.9,99.3 L450.6,99.4 L451.3,99.0 L452.0,99.3 L452.7,99.3 L453.4,99.2 L454.1,99.4 L454.8,99.4 L455.5,99.3 L456.2,99.4 L456.9,99.3 L457.6,99.4 L458.3,99.0 L459.0,99.3 L459.7,99.3 L460.4,99.3 L461.1,99.1 L461.8,99.0 L462.5,99.3 L463.2,99.4 L463.9,99.1 L464.6,99.1 L465.3,99.1 L466.0,99.0 L466.7,99.3 L467.4,99.4 L468.1,99.4 L468.8,99.1 L469.5,99.3 L470.2,99.0 L470.9,99.4 L471.6,99.1 L472.3,99.0 L473.0,99.3 L473.7,99.0 L474.4,99.1 L475.1,99.0 L475.8,99.2 L476.5,99.2 L477.2,99.4 L477.9,99.0 L478.6,99.4 L479.3,99.0 L480.0,99.1 L480.7,99.3 L481.4,99.1 L482.1,99.1 L482.8,99.2 L483.5,99.1 L484.2,99.3 L484.9,99.1 L485.6,99.4 L486.3,99.4 L487.0,99.2 L487.7,99.0 L488.4,99.3 L489.1,99.0 L489.8,99.2 L490.5,99.2 L491.2,99.0 L491.9,99.3 L492.6,99.3 L493.3,99.2 L494.0,99.2 L494.7,99.2 L495.4,99.2 L496.1,99.1 L496.8,99.4 L497.5,99.4 L498.2,99.4 L498.9,99.4 L499.6,99.1 L500.3,99.5 L501.0,99.0 L501.7,99.2 L502.4,99.1 L503.1,99.3 L503.8,99.4 L504.5,99.4 L505.2,99.3 L505.9,99.3 L506.6,99.2 L507.3,99.4 L508.0,99.3 L508.7,99.3 L509.4,99.6 L510.1,99.5 L510.8,99.5 L511.5,99.4 L512.2,99.7 L512.9,99.4 L513.6,99.5" fill="none" stroke="#e8cf5a" stroke-width="0.8"/>
<line x1="521" y1="124.6" x2="529.6" y2="124.6" stroke="#e8cf5a" stroke-width="1"/><circle cx="525.4" cy="124.6" r="1.6" fill="#f0d860"/>
<line x1="182.2" y1="215.30" x2="518" y2="215.30" stroke="#3a3e43" stroke-width="0.6"/>
<line x1="182.2" y1="207.54" x2="518" y2="207.54" stroke="#3a3e43" stroke-width="0.6"/>
<line x1="182.2" y1="199.78" x2="518" y2="199.78" stroke="#3a3e43" stroke-width="0.6"/>
<line x1="182.2" y1="192.02" x2="518" y2="192.02" stroke="#3a3e43" stroke-width="0.6"/>
<line x1="182.2" y1="184.26" x2="518" y2="184.26" stroke="#3a3e43" stroke-width="0.6"/>
<line x1="182.2" y1="176.50" x2="518" y2="176.50" stroke="#3a3e43" stroke-width="0.6"/>
<line x1="182.2" y1="215.3" x2="518" y2="215.3" stroke="#6e7379" stroke-width="0.6"/>
<line x1="181.92" y1="215.3" x2="181.92" y2="216.8" stroke="#6e7379" stroke-width="0.5"/>
<rect x="201.06" y="211.42" width="12" height="3.88" fill="#4f92f8"/>
<line x1="198.68" y1="215.3" x2="198.68" y2="216.8" stroke="#6e7379" stroke-width="0.5"/>
<rect x="217.82" y="179.60" width="12" height="35.70" fill="#4f92f8"/>
<line x1="215.44" y1="215.3" x2="215.44" y2="216.8" stroke="#6e7379" stroke-width="0.5"/>
<rect x="234.58" y="193.57" width="12" height="21.73" fill="#4f92f8"/>
<line x1="232.20" y1="215.3" x2="232.20" y2="216.8" stroke="#6e7379" stroke-width="0.5"/>
<rect x="251.34" y="207.54" width="12" height="7.76" fill="#4f92f8"/>
<line x1="248.96" y1="215.3" x2="248.96" y2="216.8" stroke="#6e7379" stroke-width="0.5"/>
<rect x="268.10" y="210.64" width="12" height="4.66" fill="#4f92f8"/>
<line x1="265.72" y1="215.3" x2="265.72" y2="216.8" stroke="#6e7379" stroke-width="0.5"/>
<rect x="284.86" y="214.52" width="12" height="0.78" fill="#4f92f8"/>
<line x1="282.48" y1="215.3" x2="282.48" y2="216.8" stroke="#6e7379" stroke-width="0.5"/>
<line x1="299.24" y1="215.3" x2="299.24" y2="216.8" stroke="#6e7379" stroke-width="0.5"/>
<line x1="316.00" y1="215.3" x2="316.00" y2="216.8" stroke="#6e7379" stroke-width="0.5"/>
<line x1="332.76" y1="215.3" x2="332.76" y2="216.8" stroke="#6e7379" stroke-width="0.5"/>
<line x1="349.52" y1="215.3" x2="349.52" y2="216.8" stroke="#6e7379" stroke-width="0.5"/>
<line x1="366.28" y1="215.3" x2="366.28" y2="216.8" stroke="#6e7379" stroke-width="0.5"/>
<line x1="383.04" y1="215.3" x2="383.04" y2="216.8" stroke="#6e7379" stroke-width="0.5"/>
<line x1="399.80" y1="215.3" x2="399.80" y2="216.8" stroke="#6e7379" stroke-width="0.5"/>
<line x1="416.56" y1="215.3" x2="416.56" y2="216.8" stroke="#6e7379" stroke-width="0.5"/>
<line x1="433.32" y1="215.3" x2="433.32" y2="216.8" stroke="#6e7379" stroke-width="0.5"/>
<line x1="450.08" y1="215.3" x2="450.08" y2="216.8" stroke="#6e7379" stroke-width="0.5"/>
<line x1="466.84" y1="215.3" x2="466.84" y2="216.8" stroke="#6e7379" stroke-width="0.5"/>
<line x1="483.60" y1="215.3" x2="483.60" y2="216.8" stroke="#6e7379" stroke-width="0.5"/>
<line x1="500.36" y1="215.3" x2="500.36" y2="216.8" stroke="#6e7379" stroke-width="0.5"/>
<rect x="526.8" y="232.1" width="7.9" height="4.1" rx="0.7" fill="#4f92f8"/>
</svg>
<div class="t " style="left:531px;top:121.80px;font-size:5.0px;color:#dfe2e5;font-weight:bold;letter-spacing:0.4px;">ΓΓΣJΛΠΔ</div>
<div class="t" style="left:189.0px;width:100px;top:108.00px;font-size:4.0px;color:#b4b8bc;text-align:center;">11/13/2023, 12:00:00 PM</div>
<div class="t" style="left:245.3px;width:100px;top:108.00px;font-size:4.0px;color:#b4b8bc;text-align:center;">11/13/2023, 4:00:00 PM</div>
<div class="t" style="left:301.6px;width:100px;top:108.00px;font-size:4.0px;color:#b4b8bc;text-align:center;">11/13/2023, 8:00:00 PM</div>
<div class="t" style="left:357.9px;width:100px;top:108.00px;font-size:4.0px;color:#b4b8bc;text-align:center;">11/14/2023, 12:00:00 AM</div>
<div class="t" style="left:414.2px;width:100px;top:108.00px;font-size:4.0px;color:#b4b8bc;text-align:center;">11/14/2023, 4:00:00 AM</div>
<svg style="position:absolute;left:145px;top:140.9px" width="6.6" height="6.6" viewBox="0 0 12 12"><circle cx="6" cy="6" r="5.6" fill="#e6e8ea"/><path d="M6 2.5 L6 6 L8.3 8.3" stroke="#212529" stroke-width="1.4" fill="none"/></svg>
<div class="t " style="left:153.2px;top:139.93px;font-size:6.45px;color:#e6e8ea;">Latency (TCP Round-Trip Time)</div>
<div style="position:absolute;left:246px;top:139.3px;width:26.7px;height:9.7px;background:#0d6efd;border-top-left-radius:1.5px;border-bottom-left-radius:1.5px;"></div>
<div class="t" style="left:209.35000000000002px;width:100px;top:141.64px;font-size:4.6px;color:#f4f6ff;text-align:center;font-weight:normal;">Histogram</div>
<div style="position:absolute;left:272.7px;top:139.3px;width:30px;height:9.7px;background:#6c757d;border-top-right-radius:1.5px;border-bottom-right-radius:1.5px;"></div>
<div class="t" style="left:237.7px;width:100px;top:141.64px;font-size:4.6px;color:#d8dadc;text-align:center;font-weight:normal;">Time_Series</div>
<div class="t " style="left:173px;top:168.32px;font-size:3.8px;color:#b4b8bc;">Frequency</div>
<div class="t" style="right:420.4px;top:213.76px;font-size:3.9px;color:#b4b8bc;text-align:right;">0</div>
<div class="t" style="right:420.4px;top:206.00px;font-size:3.9px;color:#b4b8bc;text-align:right;">10</div>
<div class="t" style="right:420.4px;top:198.24px;font-size:3.9px;color:#b4b8bc;text-align:right;">20</div>
<div class="t" style="right:420.4px;top:190.48px;font-size:3.9px;color:#b4b8bc;text-align:right;">30</div>
<div class="t" style="right:420.4px;top:182.72px;font-size:3.9px;color:#b4b8bc;text-align:right;">40</div>
<div class="t" style="right:420.4px;top:174.96px;font-size:3.9px;color:#b4b8bc;text-align:right;">50</div>
<div class="t" style="left:140.3px;width:100px;top:218.16px;font-size:3.9px;color:#b4b8bc;text-align:center;">0</div>
<div class="t" style="left:157.06px;width:100px;top:218.16px;font-size:3.9px;color:#b4b8bc;text-align:center;">10</div>
<div class="t" style="left:173.82000000000002px;width:100px;top:218.16px;font-size:3.9px;color:#b4b8bc;text-align:center;">20</div>
<div class="t" style="left:190.58px;width:100px;top:218.16px;font-size:3.9px;color:#b4b8bc;text-align:center;">30</div>
<div class="t" style="left:207.34000000000003px;width:100px;top:218.16px;font-size:3.9px;color:#b4b8bc;text-align:center;">40</div>
<div class="t" style="left:224.10000000000002px;width:100px;top:218.16px;font-size:3.9px;color:#b4b8bc;text-align:center;">50</div>
<div class="t" style="left:240.86px;width:100px;top:218.16px;font-size:3.9px;color:#b4b8bc;text-align:center;">60</div>
<div class="t" style="left:257.62px;width:100px;top:218.16px;font-size:3.9px;color:#b4b8bc;text-align:center;">70</div>
<div class="t" style="left:274.38px;width:100px;top:218.16px;font-size:3.9px;color:#b4b8bc;text-align:center;">80</div>
<div class="t" style="left:291.14px;width:100px;top:218.16px;font-size:3.9px;color:#b4b8bc;text-align:center;">90</div>
<div class="t" style="left:307.90000000000003px;width:100px;top:218.16px;font-size:3.9px;color:#b4b8bc;text-align:center;">100</div>
<div class="t" style="left:324.66px;width:100px;top:218.16px;font-size:3.9px;color:#b4b8bc;text-align:center;">110</div>
<div class="t" style="left:341.42px;width:100px;top:218.16px;font-size:3.9px;color:#b4b8bc;text-align:center;">120</div>
<div class="t" style="left:358.18000000000006px;width:100px;top:218.16px;font-size:3.9px;color:#b4b8bc;text-align:center;">130</div>
<div class="t" style="left:374.94000000000005px;width:100px;top:218.16px;font-size:3.9px;color:#b4b8bc;text-align:center;">140</div>
<div class="t" style="left:391.70000000000005px;width:100px;top:218.16px;font-size:3.9px;color:#b4b8bc;text-align:center;">150</div>
<div class="t" style="left:408.46000000000004px;width:100px;top:218.16px;font-size:3.9px;color:#b4b8bc;text-align:center;">160</div>
<div class="t" style="left:425.22px;width:100px;top:218.16px;font-size:3.9px;color:#b4b8bc;text-align:center;">170</div>
<div class="t" style="left:441.98px;width:100px;top:218.16px;font-size:3.9px;color:#b4b8bc;text-align:center;">180</div>
<div class="t" style="left:458.74000000000007px;width:100px;top:218.16px;font-size:3.9px;color:#b4b8bc;text-align:center;">190</div>
<div class="t " style="left:536px;top:231.60px;font-size:5.0px;color:#dfe2e5;font-weight:bold;letter-spacing:0.4px;">ΓΓΣJΛΠΔ</div>
<svg style="position:absolute;left:145px;top:244.8px" width="4.6" height="7.2" viewBox="0 0 8 12"><path d="M0.5 0.5 H7.5 M0.5 11.5 H7.5 M1.5 0.5 Q1.5 4 4 6 Q6.5 8 6.5 11.5 M6.5 0.5 Q6.5 4 4 6 Q1.5 8 1.5 11.5" stroke="#e6e8ea" stroke-width="1.1" fill="none"/><path d="M2.5 10.8 Q4 8.5 5.5 10.8 Z" fill="#e6e8ea"/></svg>
<div class="t " style="left:151px;top:244.92px;font-size:6.8px;color:#e6e8ea;">Heatmaps</div>
<div style="position:absolute;left:183.5px;top:244px;width:48px;height:10px;background:#0d6efd;border-top-left-radius:1.5px;border-bottom-left-radius:1.5px;"></div>
<div class="t" style="left:157.5px;width:100px;top:246.61px;font-size:4.4px;color:#f4f6ff;text-align:center;font-weight:normal;">TCP Round-Trip Time</div>
<div style="position:absolute;left:231.5px;top:244px;width:29.5px;height:10px;background:#6c757d;border-top-right-radius:1.5px;border-bottom-right-radius:1.5px;"></div>
<div class="t" style="left:196.25px;width:100px;top:246.61px;font-size:4.4px;color:#d8dadc;text-align:center;font-weight:normal;">Throughput</div>
<div style="position:absolute;left:145.2px;top:257px;width:409.8px;height:8.3px;background:#000080;"></div>
<div style="position:absolute;left:328.5px;top:258.6px;width:4px;height:1.1px;background:#ffffff;"></div>
<div style="position:absolute;left:328.5px;top:260.4px;width:4px;height:1.1px;background:#ffffff;"></div>
<div style="position:absolute;left:328.5px;top:262.2px;width:4px;height:1.1px;background:#ffffff;"></div>
<div class="t " style="left:336px;top:258.00px;font-size:6.0px;color:#ffffff;font-weight:bold;letter-spacing:1.3px;">ΓΓΣJΛΠΔ</div>
<svg style="position:absolute;left:0;top:0" width="600" height="438" shape-rendering="crispEdges">
<rect x="248.00" y="265.30" width="20.52" height="6.52" fill="#88cc00"/>
<rect x="268.47" y="265.30" width="20.52" height="6.52" fill="#88cc00"/>
<rect x="288.93" y="265.30" width="20.52" height="6.52" fill="#88cc00"/>
<rect x="309.40" y="265.30" width="20.52" height="6.52" fill="#88cc00"/>
<rect x="329.87" y="265.30" width="20.52" height="6.52" fill="#88cc00"/>
<rect x="350.33" y="265.30" width="20.52" height="6.52" fill="#88cc00"/>
<rect x="370.80" y="265.30" width="20.52" height="6.52" fill="#88cc00"/>
<rect x="391.27" y="265.30" width="20.52" height="6.52" fill="#88cc00"/>
<rect x="411.73" y="265.30" width="20.52" height="6.52" fill="#88cc00"/>
<rect x="432.20" y="265.30" width="20.52" height="6.52" fill="#8cce00"/>
<rect x="452.67" y="265.30" width="20.52" height="6.52" fill="#8cce00"/>
<rect x="473.13" y="265.30" width="20.52" height="6.52" fill="#8cce00"/>
<rect x="493.60" y="265.30" width="20.52" height="6.52" fill="#8cce00"/>
<rect x="514.07" y="265.30" width="20.52" height="6.52" fill="#8cce00"/>
<rect x="534.53" y="265.30" width="20.52" height="6.52" fill="#8cce00"/>
<rect x="248.00" y="271.77" width="20.52" height="6.52" fill="#88cc00"/>
<rect x="268.47" y="271.77" width="20.52" height="6.52" fill="#88cc00"/>
<rect x="288.93" y="271.77" width="20.52" height="6.52" fill="#88cc00"/>
<rect x="309.40" y="271.77" width="20.52" height="6.52" fill="#88cc00"/>
<rect x="329.87" y="271.77" width="20.52" height="6.52" fill="#88cc00"/>
<rect x="350.33" y="271.77" width="20.52" height="6.52" fill="#88cc00"/>
<rect x="370.80" y="271.77" width="20.52" height="6.52" fill="#88cc00"/>
<rect x="391.27" y="271.77" width="20.52" height="6.52" fill="#88cc00"/>
<rect x="411.73" y="271.77" width="20.52" height="6.52" fill="#88cc00"/>
<rect x="432.20" y="271.77" width="20.52" height="6.52" fill="#8cce00"/>
<rect x="452.67" y="271.77" width="20.52" height="6.52" fill="#8cce00"/>
<rect x="473.13" y="271.77" width="20.52" height="6.52" fill="#8cce00"/>
<rect x="493.60" y="271.77" width="20.52" height="6.52" fill="#8cce00"/>
<rect x="514.07" y="271.77" width="20.52" height="6.52" fill="#8cce00"/>
<rect x="534.53" y="271.77" width="20.52" height="6.52" fill="#8cce00"/>
<rect x="248.00" y="278.24" width="20.52" height="6.52" fill="#88cc00"/>
<rect x="268.47" y="278.24" width="20.52" height="6.52" fill="#88cc00"/>
<rect x="288.93" y="278.24" width="20.52" height="6.52" fill="#88cc00"/>
<rect x="309.40" y="278.24" width="20.52" height="6.52" fill="#88cc00"/>
<rect x="329.87" y="278.24" width="20.52" height="6.52" fill="#88cc00"/>
<rect x="350.33" y="278.24" width="20.52" height="6.52" fill="#88cc00"/>
<rect x="370.80" y="278.24" width="20.52" height="6.52" fill="#88cc00"/>
<rect x="391.27" y="278.24" width="20.52" height="6.52" fill="#88cc00"/>
<rect x="411.73" y="278.24" width="20.52" height="6.52" fill="#88cc00"/>
<rect x="432.20" y="278.24" width="20.52" height="6.52" fill="#8cce00"/>
<rect x="452.67" y="278.24" width="20.52" height="6.52" fill="#8cce00"/>
<rect x="473.13" y="278.24" width="20.52" height="6.52" fill="#8cce00"/>
<rect x="493.60" y="278.24" width="20.52" height="6.52" fill="#8cce00"/>
<rect x="514.07" y="278.24" width="20.52" height="6.52" fill="#8cce00"/>
<rect x="534.53" y="278.24" width="20.52" height="6.52" fill="#8cce00"/>
<rect x="248.00" y="284.71" width="20.52" height="6.52" fill="#88cc00"/>
<rect x="268.47" y="284.71" width="20.52" height="6.52" fill="#88cc00"/>
<rect x="288.93" y="284.71" width="20.52" height="6.52" fill="#88cc00"/>
<rect x="309.40" y="284.71" width="20.52" height="6.52" fill="#88cc00"/>
<rect x="329.87" y="284.71" width="20.52" height="6.52" fill="#88cc00"/>
<rect x="350.33" y="284.71" width="20.52" height="6.52" fill="#88cc00"/>
<rect x="370.80" y="284.71" width="20.52" height="6.52" fill="#88cc00"/>
<rect x="391.27" y="284.71" width="20.52" height="6.52" fill="#88cc00"/>
<rect x="411.73" y="284.71" width="20.52" height="6.52" fill="#88cc00"/>
<rect x="432.20" y="284.71" width="20.52" height="6.52" fill="#8cce00"/>
<rect x="452.67" y="284.71" width="20.52" height="6.52" fill="#8cce00"/>
<rect x="473.13" y="284.71" width="20.52" height="6.52" fill="#8cce00"/>
<rect x="493.60" y="284.71" width="20.52" height="6.52" fill="#8cce00"/>
<rect x="514.07" y="284.71" width="20.52" height="6.52" fill="#8cce00"/>
<rect x="534.53" y="284.71" width="20.52" height="6.52" fill="#8cce00"/>
<rect x="248.00" y="291.18" width="20.52" height="6.52" fill="#88cc00"/>
<rect x="268.47" y="291.18" width="20.52" height="6.52" fill="#88cc00"/>
<rect x="288.93" y="291.18" width="20.52" height="6.52" fill="#88cc00"/>
<rect x="309.40" y="291.18" width="20.52" height="6.52" fill="#88cc00"/>
<rect x="329.87" y="291.18" width="20.52" height="6.52" fill="#88cc00"/>
<rect x="350.33" y="291.18" width="20.52" height="6.52" fill="#88cc00"/>
<rect x="370.80" y="291.18" width="20.52" height="6.52" fill="#88cc00"/>
<rect x="391.27" y="291.18" width="20.52" height="6.52" fill="#88cc00"/>
<rect x="411.73" y="291.18" width="20.52" height="6.52" fill="#88cc00"/>
<rect x="432.20" y="291.18" width="20.52" height="6.52" fill="#8cce00"/>
<rect x="452.67" y="291.18" width="20.52" height="6.52" fill="#8cce00"/>
<rect x="473.13" y="291.18" width="20.52" height="6.52" fill="#8cce00"/>
<rect x="493.60" y="291.18" width="20.52" height="6.52" fill="#8cce00"/>
<rect x="514.07" y="291.18" width="20.52" height="6.52" fill="#8cce00"/>
<rect x="534.53" y="291.18" width="20.52" height="6.52" fill="#8cce00"/>
<rect x="248.00" y="297.65" width="20.52" height="6.52" fill="#98d400"/>
<rect x="268.47" y="297.65" width="20.52" height="6.52" fill="#8cce00"/>
<rect x="288.93" y="297.65" width="20.52" height="6.52" fill="#7ac500"/>
<rect x="309.40" y="297.65" width="20.52" height="6.52" fill="#74c200"/>
<rect x="329.87" y="297.65" width="20.52" height="6.52" fill="#7ac500"/>
<rect x="350.33" y="297.65" width="20.52" height="6.52" fill="#9cd600"/>
<rect x="370.80" y="297.65" width="20.52" height="6.52" fill="#74c200"/>
<rect x="391.27" y="297.65" width="20.52" height="6.52" fill="#90d000"/>
<rect x="411.73" y="297.65" width="20.52" height="6.52" fill="#94d200"/>
<rect x="432.20" y="297.65" width="20.52" height="6.52" fill="#a0d800"/>
<rect x="452.67" y="297.65" width="20.52" height="6.52" fill="#bee300"/>
<rect x="473.13" y="297.65" width="20.52" height="6.52" fill="#d2ea00"/>
<rect x="493.60" y="297.65" width="20.52" height="6.52" fill="#a0d800"/>
<rect x="514.07" y="297.65" width="20.52" height="6.52" fill="#90d000"/>
<rect x="534.53" y="297.65" width="20.52" height="6.52" fill="#aadc00"/>
<rect x="248.00" y="304.12" width="20.52" height="6.52" fill="#a0d800"/>
<rect x="268.47" y="304.12" width="20.52" height="6.52" fill="#a0d800"/>
<rect x="288.93" y="304.12" width="20.52" height="6.52" fill="#a0d800"/>
<rect x="309.40" y="304.12" width="20.52" height="6.52" fill="#a0d800"/>
<rect x="329.87" y="304.12" width="20.52" height="6.52" fill="#a0d800"/>
<rect x="350.33" y="304.12" width="20.52" height="6.52" fill="#a0d800"/>
<rect x="370.80" y="304.12" width="20.52" height="6.52" fill="#a0d800"/>
<rect x="391.27" y="304.12" width="20.52" height="6.52" fill="#a0d800"/>
<rect x="411.73" y="304.12" width="20.52" height="6.52" fill="#a0d800"/>
<rect x="432.20" y="304.12" width="20.52" height="6.52" fill="#a0d800"/>
<rect x="452.67" y="304.12" width="20.52" height="6.52" fill="#a0d800"/>
<rect x="473.13" y="304.12" width="20.52" height="6.52" fill="#a0d800"/>
<rect x="493.60" y="304.12" width="20.52" height="6.52" fill="#a0d800"/>
<rect x="514.07" y="304.12" width="20.52" height="6.52" fill="#a0d800"/>
<rect x="534.53" y="304.12" width="20.52" height="6.52" fill="#a0d800"/>
<rect x="248.00" y="310.59" width="20.52" height="6.52" fill="#8cce00"/>
<rect x="268.47" y="310.59" width="20.52" height="6.52" fill="#90d000"/>
<rect x="288.93" y="310.59" width="20.52" height="6.52" fill="#90d000"/>
<rect x="309.40" y="310.59" width="20.52" height="6.52" fill="#90d000"/>
<rect x="329.87" y="310.59" width="20.52" height="6.52" fill="#90d000"/>
<rect x="350.33" y="310.59" width="20.52" height="6.52" fill="#90d000"/>
<rect x="370.80" y="310.59" width="20.52" height="6.52" fill="#94d200"/>
<rect x="391.27" y="310.59" width="20.52" height="6.52" fill="#8cce00"/>
<rect x="411.73" y="310.59" width="20.52" height="6.52" fill="#90d000"/>
<rect x="432.20" y="310.59" width="20.52" height="6.52" fill="#90d000"/>
<rect x="452.67" y="310.59" width="20.52" height="6.52" fill="#94d200"/>
<rect x="473.13" y="310.59" width="20.52" height="6.52" fill="#90d000"/>
<rect x="493.60" y="310.59" width="20.52" height="6.52" fill="#90d000"/>
<rect x="514.07" y="310.59" width="20.52" height="6.52" fill="#90d000"/>
<rect x="534.53" y="310.59" width="20.52" height="6.52" fill="#a0d800"/>
<rect x="248.00" y="317.06" width="20.52" height="6.52" fill="#8cce00"/>
<rect x="268.47" y="317.06" width="20.52" height="6.52" fill="#8cce00"/>
<rect x="288.93" y="317.06" width="20.52" height="6.52" fill="#8cce00"/>
<rect x="309.40" y="317.06" width="20.52" height="6.52" fill="#8cce00"/>
<rect x="329.87" y="317.06" width="20.52" height="6.52" fill="#8cce00"/>
<rect x="350.33" y="317.06" width="20.52" height="6.52" fill="#8cce00"/>
<rect x="370.80" y="317.06" width="20.52" height="6.52" fill="#8cce00"/>
<rect x="391.27" y="317.06" width="20.52" height="6.52" fill="#8cce00"/>
<rect x="411.73" y="317.06" width="20.52" height="6.52" fill="#8cce00"/>
<rect x="432.20" y="317.06" width="20.52" height="6.52" fill="#8cce00"/>
<rect x="452.67" y="317.06" width="20.52" height="6.52" fill="#90d000"/>
<rect x="473.13" y="317.06" width="20.52" height="6.52" fill="#90d000"/>
<rect x="493.60" y="317.06" width="20.52" height="6.52" fill="#8cce00"/>
<rect x="514.07" y="317.06" width="20.52" height="6.52" fill="#90d000"/>
<rect x="534.53" y="317.06" width="20.52" height="6.52" fill="#8cce00"/>
<rect x="248.00" y="323.54" width="20.52" height="6.52" fill="#8cce00"/>
<rect x="268.47" y="323.54" width="20.52" height="6.52" fill="#74c200"/>
<rect x="288.93" y="323.54" width="20.52" height="6.52" fill="#9cd600"/>
<rect x="309.40" y="323.54" width="20.52" height="6.52" fill="#6dbe00"/>
<rect x="329.87" y="323.54" width="20.52" height="6.52" fill="#88cc00"/>
<rect x="350.33" y="323.54" width="20.52" height="6.52" fill="#a0d800"/>
<rect x="370.80" y="323.54" width="20.52" height="6.52" fill="#8cce00"/>
<rect x="391.27" y="323.54" width="20.52" height="6.52" fill="#90d000"/>
<rect x="411.73" y="323.54" width="20.52" height="6.52" fill="#74c200"/>
<rect x="432.20" y="323.54" width="20.52" height="6.52" fill="#a3d900"/>
<rect x="452.67" y="323.54" width="20.52" height="6.52" fill="#ecf400"/>
<rect x="473.13" y="323.54" width="20.52" height="6.52" fill="#a3d900"/>
<rect x="493.60" y="323.54" width="20.52" height="6.52" fill="#b0de00"/>
<rect x="514.07" y="323.54" width="20.52" height="6.52" fill="#aadc00"/>
<rect x="534.53" y="323.54" width="20.52" height="6.52" fill="#a0d800"/>
<rect x="248.00" y="330.01" width="20.52" height="6.52" fill="#94d200"/>
<rect x="268.47" y="330.01" width="20.52" height="6.52" fill="#94d200"/>
<rect x="288.93" y="330.01" width="20.52" height="6.52" fill="#98d400"/>
<rect x="309.40" y="330.01" width="20.52" height="6.52" fill="#98d400"/>
<rect x="329.87" y="330.01" width="20.52" height="6.52" fill="#98d400"/>
<rect x="350.33" y="330.01" width="20.52" height="6.52" fill="#98d400"/>
<rect x="370.80" y="330.01" width="20.52" height="6.52" fill="#9cd600"/>
<rect x="391.27" y="330.01" width="20.52" height="6.52" fill="#9cd600"/>
<rect x="411.73" y="330.01" width="20.52" height="6.52" fill="#98d400"/>
<rect x="432.20" y="330.01" width="20.52" height="6.52" fill="#98d400"/>
<rect x="452.67" y="330.01" width="20.52" height="6.52" fill="#9cd600"/>
<rect x="473.13" y="330.01" width="20.52" height="6.52" fill="#9cd600"/>
<rect x="493.60" y="330.01" width="20.52" height="6.52" fill="#9cd600"/>
<rect x="514.07" y="330.01" width="20.52" height="6.52" fill="#9cd600"/>
<rect x="534.53" y="330.01" width="20.52" height="6.52" fill="#a0d800"/>
<rect x="248.00" y="336.48" width="20.52" height="6.52" fill="#a6da00"/>
<rect x="268.47" y="336.48" width="20.52" height="6.52" fill="#addd00"/>
<rect x="288.93" y="336.48" width="20.52" height="6.52" fill="#aadc00"/>
<rect x="309.40" y="336.48" width="20.52" height="6.52" fill="#aadc00"/>
<rect x="329.87" y="336.48" width="20.52" height="6.52" fill="#aadc00"/>
<rect x="350.33" y="336.48" width="20.52" height="6.52" fill="#a6da00"/>
<rect x="370.80" y="336.48" width="20.52" height="6.52" fill="#a3d900"/>
<rect x="391.27" y="336.48" width="20.52" height="6.52" fill="#a3d900"/>
<rect x="411.73" y="336.48" width="20.52" height="6.52" fill="#a3d900"/>
<rect x="432.20" y="336.48" width="20.52" height="6.52" fill="#a6da00"/>
<rect x="452.67" y="336.48" width="20.52" height="6.52" fill="#a3d900"/>
<rect x="473.13" y="336.48" width="20.52" height="6.52" fill="#a3d900"/>
<rect x="493.60" y="336.48" width="20.52" height="6.52" fill="#a3d900"/>
<rect x="514.07" y="336.48" width="20.52" height="6.52" fill="#a3d900"/>
<rect x="534.53" y="336.48" width="20.52" height="6.52" fill="#a6da00"/>
<rect x="248.00" y="342.95" width="20.52" height="6.52" fill="#d7ec00"/>
<rect x="268.47" y="342.95" width="20.52" height="6.52" fill="#ffe600"/>
<rect x="288.93" y="342.95" width="20.52" height="6.52" fill="#f8c700"/>
<rect x="309.40" y="342.95" width="20.52" height="6.52" fill="#ffe900"/>
<rect x="329.87" y="342.95" width="20.52" height="6.52" fill="#e04000"/>
<rect x="350.33" y="342.95" width="20.52" height="6.52" fill="#ffe900"/>
<rect x="370.80" y="342.95" width="20.52" height="6.52" fill="#ffe900"/>
<rect x="391.27" y="342.95" width="20.52" height="6.52" fill="#f6f200"/>
<rect x="411.73" y="342.95" width="20.52" height="6.52" fill="#f6f200"/>
<rect x="432.20" y="342.95" width="20.52" height="6.52" fill="#ecf400"/>
<rect x="452.67" y="342.95" width="20.52" height="6.52" fill="#d7ec00"/>
<rect x="473.13" y="342.95" width="20.52" height="6.52" fill="#ffe900"/>
<rect x="493.60" y="342.95" width="20.52" height="6.52" fill="#f4b800"/>
<rect x="514.07" y="342.95" width="20.52" height="6.52" fill="#ffe900"/>
<rect x="534.53" y="342.95" width="20.52" height="6.52" fill="#f0a000"/>
<rect x="248.00" y="349.42" width="20.52" height="6.52" fill="#ffe200"/>
<rect x="268.47" y="349.42" width="20.52" height="6.52" fill="#ffe200"/>
<rect x="288.93" y="349.42" width="20.52" height="6.52" fill="#e7f200"/>
<rect x="309.40" y="349.42" width="20.52" height="6.52" fill="#cbe800"/>
<rect x="329.87" y="349.42" width="20.52" height="6.52" fill="#e7f200"/>
<rect x="350.33" y="349.42" width="20.52" height="6.52" fill="#ffe600"/>
<rect x="370.80" y="349.42" width="20.52" height="6.52" fill="#d00000"/>
<rect x="391.27" y="349.42" width="20.52" height="6.52" fill="#f5bc00"/>
<rect x="411.73" y="349.42" width="20.52" height="6.52" fill="#d2ea00"/>
<rect x="432.20" y="349.42" width="20.52" height="6.52" fill="#d7ec00"/>
<rect x="452.67" y="349.42" width="20.52" height="6.52" fill="#f6c100"/>
<rect x="473.13" y="349.42" width="20.52" height="6.52" fill="#ffe600"/>
<rect x="493.60" y="349.42" width="20.52" height="6.52" fill="#c4e500"/>
<rect x="514.07" y="349.42" width="20.52" height="6.52" fill="#dcee00"/>
<rect x="534.53" y="349.42" width="20.52" height="6.52" fill="#faf100"/>
<rect x="248.00" y="355.89" width="20.52" height="6.52" fill="#b0de00"/>
<rect x="268.47" y="355.89" width="20.52" height="6.52" fill="#b0de00"/>
<rect x="288.93" y="355.89" width="20.52" height="6.52" fill="#addd00"/>
<rect x="309.40" y="355.89" width="20.52" height="6.52" fill="#addd00"/>
<rect x="329.87" y="355.89" width="20.52" height="6.52" fill="#addd00"/>
<rect x="350.33" y="355.89" width="20.52" height="6.52" fill="#addd00"/>
<rect x="370.80" y="355.89" width="20.52" height="6.52" fill="#addd00"/>
<rect x="391.27" y="355.89" width="20.52" height="6.52" fill="#addd00"/>
<rect x="411.73" y="355.89" width="20.52" height="6.52" fill="#addd00"/>
<rect x="432.20" y="355.89" width="20.52" height="6.52" fill="#addd00"/>
<rect x="452.67" y="355.89" width="20.52" height="6.52" fill="#aadc00"/>
<rect x="473.13" y="355.89" width="20.52" height="6.52" fill="#addd00"/>
<rect x="493.60" y="355.89" width="20.52" height="6.52" fill="#aadc00"/>
<rect x="514.07" y="355.89" width="20.52" height="6.52" fill="#addd00"/>
<rect x="534.53" y="355.89" width="20.52" height="6.52" fill="#b0de00"/>
<rect x="248.00" y="362.36" width="20.52" height="6.52" fill="#66bb00"/>
<rect x="268.47" y="362.36" width="20.52" height="6.52" fill="#66bb00"/>
<rect x="288.93" y="362.36" width="20.52" height="6.52" fill="#66bb00"/>
<rect x="309.40" y="362.36" width="20.52" height="6.52" fill="#6dbe00"/>
<rect x="329.87" y="362.36" width="20.52" height="6.52" fill="#66bb00"/>
<rect x="350.33" y="362.36" width="20.52" height="6.52" fill="#66bb00"/>
<rect x="370.80" y="362.36" width="20.52" height="6.52" fill="#66bb00"/>
<rect x="391.27" y="362.36" width="20.52" height="6.52" fill="#7ac500"/>
<rect x="411.73" y="362.36" width="20.52" height="6.52" fill="#74c200"/>
<rect x="432.20" y="362.36" width="20.52" height="6.52" fill="#7ac500"/>
<rect x="452.67" y="362.36" width="20.52" height="6.52" fill="#74c200"/>
<rect x="473.13" y="362.36" width="20.52" height="6.52" fill="#88cc00"/>
<rect x="493.60" y="362.36" width="20.52" height="6.52" fill="#74c200"/>
<rect x="514.07" y="362.36" width="20.52" height="6.52" fill="#81c900"/>
<rect x="534.53" y="362.36" width="20.52" height="6.52" fill="#66bb00"/>
<rect x="248.00" y="368.83" width="20.52" height="6.52" fill="#90d000"/>
<rect x="268.47" y="368.83" width="20.52" height="6.52" fill="#90d000"/>
<rect x="288.93" y="368.83" width="20.52" height="6.52" fill="#90d000"/>
<rect x="309.40" y="368.83" width="20.52" height="6.52" fill="#8cce00"/>
<rect x="329.87" y="368.83" width="20.52" height="6.52" fill="#8cce00"/>
<rect x="350.33" y="368.83" width="20.52" height="6.52" fill="#8cce00"/>
<rect x="370.80" y="368.83" width="20.52" height="6.52" fill="#8cce00"/>
<rect x="391.27" y="368.83" width="20.52" height="6.52" fill="#90d000"/>
<rect x="411.73" y="368.83" width="20.52" height="6.52" fill="#90d000"/>
<rect x="432.20" y="368.83" width="20.52" height="6.52" fill="#8cce00"/>
<rect x="452.67" y="368.83" width="20.52" height="6.52" fill="#8cce00"/>
<rect x="473.13" y="368.83" width="20.52" height="6.52" fill="#90d000"/>
<rect x="493.60" y="368.83" width="20.52" height="6.52" fill="#90d000"/>
<rect x="514.07" y="368.83" width="20.52" height="6.52" fill="#90d000"/>
<rect x="534.53" y="368.83" width="20.52" height="6.52" fill="#8cce00"/>
</svg>
<div class="t" style="left:208.23333333333335px;width:100px;top:266.92px;font-size:3.7px;color:rgba(0,0,0,0.8);text-align:center;filter:none;">26</div>
<div class="t" style="left:228.7px;width:100px;top:266.92px;font-size:3.7px;color:rgba(0,0,0,0.8);text-align:center;filter:none;">26</div>
<div class="t" style="left:249.16666666666669px;width:100px;top:266.92px;font-size:3.7px;color:rgba(0,0,0,0.8);text-align:center;filter:none;">26</div>
<div class="t" style="left:269.6333333333333px;width:100px;top:266.92px;font-size:3.7px;color:rgba(0,0,0,0.8);text-align:center;filter:none;">26</div>
<div class="t" style="left:290.1px;width:100px;top:266.92px;font-size:3.7px;color:rgba(0,0,0,0.8);text-align:center;filter:none;">26</div>
<div class="t" style="left:310.56666666666666px;width:100px;top:266.92px;font-size:3.7px;color:rgba(0,0,0,0.8);text-align:center;filter:none;">26</div>
<div class="t" style="left:331.0333333333333px;width:100px;top:266.92px;font-size:3.7px;color:rgba(0,0,0,0.8);text-align:center;filter:none;">26</div>
<div class="t" style="left:351.5px;width:100px;top:266.92px;font-size:3.7px;color:rgba(0,0,0,0.8);text-align:center;filter:none;">26</div>
<div class="t" style="left:371.9666666666667px;width:100px;top:266.92px;font-size:3.7px;color:rgba(0,0,0,0.8);text-align:center;filter:none;">26</div>
<div class="t" style="left:392.43333333333334px;width:100px;top:266.92px;font-size:3.7px;color:rgba(0,0,0,0.8);text-align:center;filter:none;">27</div>
<div class="t" style="left:412.9px;width:100px;top:266.92px;font-size:3.7px;color:rgba(0,0,0,0.8);text-align:center;filter:none;">27</div>
<div class="t" style="left:433.3666666666667px;width:100px;top:266.92px;font-size:3.7px;color:rgba(0,0,0,0.8);text-align:center;filter:none;">27</div>
<div class="t" style="left:453.8333333333333px;width:100px;top:266.92px;font-size:3.7px;color:rgba(0,0,0,0.8);text-align:center;filter:none;">27</div>
<div class="t" style="left:474.29999999999995px;width:100px;top:266.92px;font-size:3.7px;color:rgba(0,0,0,0.8);text-align:center;filter:none;">27</div>
<div class="t" style="left:494.76666666666665px;width:100px;top:266.92px;font-size:3.7px;color:rgba(0,0,0,0.8);text-align:center;filter:none;">27</div>
<div class="t" style="left:208.23333333333335px;width:100px;top:273.39px;font-size:3.7px;color:rgba(0,0,0,0.8);text-align:center;filter:none;">26</div>
<div class="t" style="left:228.7px;width:100px;top:273.39px;font-size:3.7px;color:rgba(0,0,0,0.8);text-align:center;filter:none;">26</div>
<div class="t" style="left:249.16666666666669px;width:100px;top:273.39px;font-size:3.7px;color:rgba(0,0,0,0.8);text-align:center;filter:none;">26</div>
<div class="t" style="left:269.6333333333333px;width:100px;top:273.39px;font-size:3.7px;color:rgba(0,0,0,0.8);text-align:center;filter:none;">26</div>
<div class="t" style="left:290.1px;width:100px;top:273.39px;font-size:3.7px;color:rgba(0,0,0,0.8);text-align:center;filter:none;">26</div>
<div class="t" style="left:310.56666666666666px;width:100px;top:273.39px;font-size:3.7px;color:rgba(0,0,0,0.8);text-align:center;filter:none;">26</div>
<div class="t" style="left:331.0333333333333px;width:100px;top:273.39px;font-size:3.7px;color:rgba(0,0,0,0.8);text-align:center;filter:none;">26</div>
<div class="t" style="left:351.5px;width:100px;top:273.39px;font-size:3.7px;color:rgba(0,0,0,0.8);text-align:center;filter:none;">26</div>
<div class="t" style="left:371.9666666666667px;width:100px;top:273.39px;font-size:3.7px;color:rgba(0,0,0,0.8);text-align:center;filter:none;">26</div>
<div class="t" style="left:392.43333333333334px;width:100px;top:273.39px;font-size:3.7px;color:rgba(0,0,0,0.8);text-align:center;filter:none;">27</div>
<div class="t" style="left:412.9px;width:100px;top:273.39px;font-size:3.7px;color:rgba(0,0,0,0.8);text-align:center;filter:none;">27</div>
<div class="t" style="left:433.3666666666667px;width:100px;top:273.39px;font-size:3.7px;color:rgba(0,0,0,0.8);text-align:center;filter:none;">27</div>
<div class="t" style="left:453.8333333333333px;width:100px;top:273.39px;font-size:3.7px;color:rgba(0,0,0,0.8);text-align:center;filter:none;">27</div>
<div class="t" style="left:474.29999999999995px;width:100px;top:273.39px;font-size:3.7px;color:rgba(0,0,0,0.8);text-align:center;filter:none;">27</div>
<div class="t" style="left:494.76666666666665px;width:100px;top:273.39px;font-size:3.7px;color:rgba(0,0,0,0.8);text-align:center;filter:none;">27</div>
<div class="t" style="left:208.23333333333335px;width:100px;top:279.86px;font-size:3.7px;color:rgba(0,0,0,0.8);text-align:center;filter:none;">26</div>
<div class="t" style="left:228.7px;width:100px;top:279.86px;font-size:3.7px;color:rgba(0,0,0,0.8);text-align:center;filter:none;">26</div>
<div class="t" style="left:249.16666666666669px;width:100px;top:279.86px;font-size:3.7px;color:rgba(0,0,0,0.8);text-align:center;filter:none;">26</div>
<div class="t" style="left:269.6333333333333px;width:100px;top:279.86px;font-size:3.7px;color:rgba(0,0,0,0.8);text-align:center;filter:none;">26</div>
<div class="t" style="left:290.1px;width:100px;top:279.86px;font-size:3.7px;color:rgba(0,0,0,0.8);text-align:center;filter:none;">26</div>
<div class="t" style="left:310.56666666666666px;width:100px;top:279.86px;font-size:3.7px;color:rgba(0,0,0,0.8);text-align:center;filter:none;">26</div>
<div class="t" style="left:331.0333333333333px;width:100px;top:279.86px;font-size:3.7px;color:rgba(0,0,0,0.8);text-align:center;filter:none;">26</div>
<div class="t" style="left:351.5px;width:100px;top:279.86px;font-size:3.7px;color:rgba(0,0,0,0.8);text-align:center;filter:none;">26</div>
<div class="t" style="left:371.9666666666667px;width:100px;top:279.86px;font-size:3.7px;color:rgba(0,0,0,0.8);text-align:center;filter:none;">26</div>
<div class="t" style="left:392.43333333333334px;width:100px;top:279.86px;font-size:3.7px;color:rgba(0,0,0,0.8);text-align:center;filter:none;">27</div>
<div class="t" style="left:412.9px;width:100px;top:279.86px;font-size:3.7px;color:rgba(0,0,0,0.8);text-align:center;filter:none;">27</div>
<div class="t" style="left:433.3666666666667px;width:100px;top:279.86px;font-size:3.7px;color:rgba(0,0,0,0.8);text-align:center;filter:none;">27</div>
<div class="t" style="left:453.8333333333333px;width:100px;top:279.86px;font-size:3.7px;color:rgba(0,0,0,0.8);text-align:center;filter:none;">27</div>
<div class="t" style="left:474.29999999999995px;width:100px;top:279.86px;font-size:3.7px;color:rgba(0,0,0,0.8);text-align:center;filter:none;">27</div>
<div class="t" style="left:494.76666666666665px;width:100px;top:279.86px;font-size:3.7px;color:rgba(0,0,0,0.8);text-align:center;filter:none;">27</div>
<div class="t" style="left:208.23333333333335px;width:100px;top:286.33px;font-size:3.7px;color:rgba(0,0,0,0.8);text-align:center;filter:none;">26</div>
<div class="t" style="left:228.7px;width:100px;top:286.33px;font-size:3.7px;color:rgba(0,0,0,0.8);text-align:center;filter:none;">26</div>
<div class="t" style="left:249.16666666666669px;width:100px;top:286.33px;font-size:3.7px;color:rgba(0,0,0,0.8);text-align:center;filter:none;">26</div>
<div class="t" style="left:269.6333333333333px;width:100px;top:286.33px;font-size:3.7px;color:rgba(0,0,0,0.8);text-align:center;filter:none;">26</div>
<div class="t" style="left:290.1px;width:100px;top:286.33px;font-size:3.7px;color:rgba(0,0,0,0.8);text-align:center;filter:none;">26</div>
<div class="t" style="left:310.56666666666666px;width:100px;top:286.33px;font-size:3.7px;color:rgba(0,0,0,0.8);text-align:center;filter:none;">26</div>
<div class="t" style="left:331.0333333333333px;width:100px;top:286.33px;font-size:3.7px;color:rgba(0,0,0,0.8);text-align:center;filter:none;">26</div>
<div class="t" style="left:351.5px;width:100px;top:286.33px;font-size:3.7px;color:rgba(0,0,0,0.8);text-align:center;filter:none;">26</div>
<div class="t" style="left:371.9666666666667px;width:100px;top:286.33px;font-size:3.7px;color:rgba(0,0,0,0.8);text-align:center;filter:none;">26</div>
<div class="t" style="left:392.43333333333334px;width:100px;top:286.33px;font-size:3.7px;color:rgba(0,0,0,0.8);text-align:center;filter:none;">27</div>
<div class="t" style="left:412.9px;width:100px;top:286.33px;font-size:3.7px;color:rgba(0,0,0,0.8);text-align:center;filter:none;">27</div>
<div class="t" style="left:433.3666666666667px;width:100px;top:286.33px;font-size:3.7px;color:rgba(0,0,0,0.8);text-align:center;filter:none;">27</div>
<div class="t" style="left:453.8333333333333px;width:100px;top:286.33px;font-size:3.7px;color:rgba(0,0,0,0.8);text-align:center;filter:none;">27</div>
<div class="t" style="left:474.29999999999995px;width:100px;top:286.33px;font-size:3.7px;color:rgba(0,0,0,0.8);text-align:center;filter:none;">27</div>
<div class="t" style="left:494.76666666666665px;width:100px;top:286.33px;font-size:3.7px;color:rgba(0,0,0,0.8);text-align:center;filter:none;">27</div>
<div class="t" style="left:208.23333333333335px;width:100px;top:292.80px;font-size:3.7px;color:rgba(0,0,0,0.8);text-align:center;filter:none;">26</div>
<div class="t" style="left:228.7px;width:100px;top:292.80px;font-size:3.7px;color:rgba(0,0,0,0.8);text-align:center;filter:none;">26</div>
<div class="t" style="left:249.16666666666669px;width:100px;top:292.80px;font-size:3.7px;color:rgba(0,0,0,0.8);text-align:center;filter:none;">26</div>
<div class="t" style="left:269.6333333333333px;width:100px;top:292.80px;font-size:3.7px;color:rgba(0,0,0,0.8);text-align:center;filter:none;">26</div>
<div class="t" style="left:290.1px;width:100px;top:292.80px;font-size:3.7px;color:rgba(0,0,0,0.8);text-align:center;filter:none;">26</div>
<div class="t" style="left:310.56666666666666px;width:100px;top:292.80px;font-size:3.7px;color:rgba(0,0,0,0.8);text-align:center;filter:none;">26</div>
<div class="t" style="left:331.0333333333333px;width:100px;top:292.80px;font-size:3.7px;color:rgba(0,0,0,0.8);text-align:center;filter:none;">26</div>
<div class="t" style="left:351.5px;width:100px;top:292.80px;font-size:3.7px;color:rgba(0,0,0,0.8);text-align:center;filter:none;">26</div>
<div class="t" style="left:371.9666666666667px;width:100px;top:292.80px;font-size:3.7px;color:rgba(0,0,0,0.8);text-align:center;filter:none;">26</div>
<div class="t" style="left:392.43333333333334px;width:100px;top:292.80px;font-size:3.7px;color:rgba(0,0,0,0.8);text-align:center;filter:none;">27</div>
<div class="t" style="left:412.9px;width:100px;top:292.80px;font-size:3.7px;color:rgba(0,0,0,0.8);text-align:center;filter:none;">27</div>
<div class="t" style="left:433.3666666666667px;width:100px;top:292.80px;font-size:3.7px;color:rgba(0,0,0,0.8);text-align:center;filter:none;">27</div>
<div class="t" style="left:453.8333333333333px;width:100px;top:292.80px;font-size:3.7px;color:rgba(0,0,0,0.8);text-align:center;filter:none;">27</div>
<div class="t" style="left:474.29999999999995px;width:100px;top:292.80px;font-size:3.7px;color:rgba(0,0,0,0.8);text-align:center;filter:none;">27</div>
<div class="t" style="left:494.76666666666665px;width:100px;top:292.80px;font-size:3.7px;color:rgba(0,0,0,0.8);text-align:center;filter:none;">27</div>
<div class="t" style="left:208.23333333333335px;width:100px;top:299.27px;font-size:3.7px;color:rgba(0,0,0,0.8);text-align:center;filter:none;">30</div>
<div class="t" style="left:228.7px;width:100px;top:299.27px;font-size:3.7px;color:rgba(0,0,0,0.8);text-align:center;filter:none;">27</div>
<div class="t" style="left:249.16666666666669px;width:100px;top:299.27px;font-size:3.7px;color:rgba(0,0,0,0.8);text-align:center;filter:none;">24</div>
<div class="t" style="left:269.6333333333333px;width:100px;top:299.27px;font-size:3.7px;color:rgba(0,0,0,0.8);text-align:center;filter:none;">23</div>
<div class="t" style="left:290.1px;width:100px;top:299.27px;font-size:3.7px;color:rgba(0,0,0,0.8);text-align:center;filter:none;">24</div>
<div class="t" style="left:310.56666666666666px;width:100px;top:299.27px;font-size:3.7px;color:rgba(0,0,0,0.8);text-align:center;filter:none;">31</div>
<div class="t" style="left:331.0333333333333px;width:100px;top:299.27px;font-size:3.7px;color:rgba(0,0,0,0.8);text-align:center;filter:none;">23</div>
<div class="t" style="left:351.5px;width:100px;top:299.27px;font-size:3.7px;color:rgba(0,0,0,0.8);text-align:center;filter:none;">28</div>
<div class="t" style="left:371.9666666666667px;width:100px;top:299.27px;font-size:3.7px;color:rgba(0,0,0,0.8);text-align:center;filter:none;">29</div>
<div class="t" style="left:392.43333333333334px;width:100px;top:299.27px;font-size:3.7px;color:rgba(0,0,0,0.8);text-align:center;filter:none;">32</div>
<div class="t" style="left:412.9px;width:100px;top:299.27px;font-size:3.7px;color:rgba(0,0,0,0.8);text-align:center;filter:none;">39</div>
<div class="t" style="left:433.3666666666667px;width:100px;top:299.27px;font-size:3.7px;color:rgba(0,0,0,0.8);text-align:center;filter:none;">42</div>
<div class="t" style="left:453.8333333333333px;width:100px;top:299.27px;font-size:3.7px;color:rgba(0,0,0,0.8);text-align:center;filter:none;">32</div>
<div class="t" style="left:474.29999999999995px;width:100px;top:299.27px;font-size:3.7px;color:rgba(0,0,0,0.8);text-align:center;filter:none;">28</div>
<div class="t" style="left:494.76666666666665px;width:100px;top:299.27px;font-size:3.7px;color:rgba(0,0,0,0.8);text-align:center;filter:none;">35</div>
<div class="t" style="left:208.23333333333335px;width:100px;top:305.74px;font-size:3.7px;color:rgba(0,0,0,0.8);text-align:center;filter:none;">32</div>
<div class="t" style="left:228.7px;width:100px;top:305.74px;font-size:3.7px;color:rgba(0,0,0,0.8);text-align:center;filter:none;">32</div>
<div class="t" style="left:249.16666666666669px;width:100px;top:305.74px;font-size:3.7px;color:rgba(0,0,0,0.8);text-align:center;filter:none;">32</div>
<div class="t" style="left:269.6333333333333px;width:100px;top:305.74px;font-size:3.7px;color:rgba(0,0,0,0.8);text-align:center;filter:none;">32</div>
<div class="t" style="left:290.1px;width:100px;top:305.74px;font-size:3.7px;color:rgba(0,0,0,0.8);text-align:center;filter:none;">32</div>
<div class="t" style="left:310.56666666666666px;width:100px;top:305.74px;font-size:3.7px;color:rgba(0,0,0,0.8);text-align:center;filter:none;">32</div>
<div class="t" style="left:331.0333333333333px;width:100px;top:305.74px;font-size:3.7px;color:rgba(0,0,0,0.8);text-align:center;filter:none;">32</div>
<div class="t" style="left:351.5px;width:100px;top:305.74px;font-size:3.7px;color:rgba(0,0,0,0.8);text-align:center;filter:none;">32</div>
<div class="t" style="left:371.9666666666667px;width:100px;top:305.74px;font-size:3.7px;color:rgba(0,0,0,0.8);text-align:center;filter:none;">32</div>
<div class="t" style="left:392.43333333333334px;width:100px;top:305.74px;font-size:3.7px;color:rgba(0,0,0,0.8);text-align:center;filter:none;">32</div>
<div class="t" style="left:412.9px;width:100px;top:305.74px;font-size:3.7px;color:rgba(0,0,0,0.8);text-align:center;filter:none;">32</div>
<div class="t" style="left:433.3666666666667px;width:100px;top:305.74px;font-size:3.7px;color:rgba(0,0,0,0.8);text-align:center;filter:none;">32</div>
<div class="t" style="left:453.8333333333333px;width:100px;top:305.74px;font-size:3.7px;color:rgba(0,0,0,0.8);text-align:center;filter:none;">32</div>
<div class="t" style="left:474.29999999999995px;width:100px;top:305.74px;font-size:3.7px;color:rgba(0,0,0,0.8);text-align:center;filter:none;">32</div>
<div class="t" style="left:494.76666666666665px;width:100px;top:305.74px;font-size:3.7px;color:rgba(0,0,0,0.8);text-align:center;filter:none;">32</div>
<div class="t" style="left:208.23333333333335px;width:100px;top:312.21px;font-size:3.7px;color:rgba(0,0,0,0.8);text-align:center;filter:none;">27</div>
<div class="t" style="left:228.7px;width:100px;top:312.21px;font-size:3.7px;color:rgba(0,0,0,0.8);text-align:center;filter:none;">28</div>
<div class="t" style="left:249.16666666666669px;width:100px;top:312.21px;font-size:3.7px;color:rgba(0,0,0,0.8);text-align:center;filter:none;">28</div>
<div class="t" style="left:269.6333333333333px;width:100px;top:312.21px;font-size:3.7px;color:rgba(0,0,0,0.8);text-align:center;filter:none;">28</div>
<div class="t" style="left:290.1px;width:100px;top:312.21px;font-size:3.7px;color:rgba(0,0,0,0.8);text-align:center;filter:none;">28</div>
<div class="t" style="left:310.56666666666666px;width:100px;top:312.21px;font-size:3.7px;color:rgba(0,0,0,0.8);text-align:center;filter:none;">28</div>
<div class="t" style="left:331.0333333333333px;width:100px;top:312.21px;font-size:3.7px;color:rgba(0,0,0,0.8);text-align:center;filter:none;">29</div>
<div class="t" style="left:351.5px;width:100px;top:312.21px;font-size:3.7px;color:rgba(0,0,0,0.8);text-align:center;filter:none;">27</div>
<div class="t" style="left:371.9666666666667px;width:100px;top:312.21px;font-size:3.7px;color:rgba(0,0,0,0.8);text-align:center;filter:none;">28</div>
<div class="t" style="left:392.43333333333334px;width:100px;top:312.21px;font-size:3.7px;color:rgba(0,0,0,0.8);text-align:center;filter:none;">28</div>
<div class="t" style="left:412.9px;width:100px;top:312.21px;font-size:3.7px;color:rgba(0,0,0,0.8);text-align:center;filter:none;">29</div>
<div class="t" style="left:433.3666666666667px;width:100px;top:312.21px;font-size:3.7px;color:rgba(0,0,0,0.8);text-align:center;filter:none;">28</div>
<div class="t" style="left:453.8333333333333px;width:100px;top:312.21px;font-size:3.7px;color:rgba(0,0,0,0.8);text-align:center;filter:none;">28</div>
<div class="t" style="left:474.29999999999995px;width:100px;top:312.21px;font-size:3.7px;color:rgba(0,0,0,0.8);text-align:center;filter:none;">28</div>
<div class="t" style="left:494.76666666666665px;width:100px;top:312.21px;font-size:3.7px;color:rgba(0,0,0,0.8);text-align:center;filter:none;">32</div>
<div class="t" style="left:208.23333333333335px;width:100px;top:318.68px;font-size:3.7px;color:rgba(0,0,0,0.8);text-align:center;filter:none;">27</div>
<div class="t" style="left:228.7px;width:100px;top:318.68px;font-size:3.7px;color:rgba(0,0,0,0.8);text-align:center;filter:none;">27</div>
<div class="t" style="left:249.16666666666669px;width:100px;top:318.68px;font-size:3.7px;color:rgba(0,0,0,0.8);text-align:center;filter:none;">27</div>
<div class="t" style="left:269.6333333333333px;width:100px;top:318.68px;font-size:3.7px;color:rgba(0,0,0,0.8);text-align:center;filter:none;">27</div>
<div class="t" style="left:290.1px;width:100px;top:318.68px;font-size:3.7px;color:rgba(0,0,0,0.8);text-align:center;filter:none;">27</div>
<div class="t" style="left:310.56666666666666px;width:100px;top:318.68px;font-size:3.7px;color:rgba(0,0,0,0.8);text-align:center;filter:none;">27</div>
<div class="t" style="left:331.0333333333333px;width:100px;top:318.68px;font-size:3.7px;color:rgba(0,0,0,0.8);text-align:center;filter:none;">27</div>
<div class="t" style="left:351.5px;width:100px;top:318.68px;font-size:3.7px;color:rgba(0,0,0,0.8);text-align:center;filter:none;">27</div>
<div class="t" style="left:371.9666666666667px;width:100px;top:318.68px;font-size:3.7px;color:rgba(0,0,0,0.8);text-align:center;filter:none;">27</div>
<div class="t" style="left:392.43333333333334px;width:100px;top:318.68px;font-size:3.7px;color:rgba(0,0,0,0.8);text-align:center;filter:none;">27</div>
<div class="t" style="left:412.9px;width:100px;top:318.68px;font-size:3.7px;color:rgba(0,0,0,0.8);text-align:center;filter:none;">28</div>
<div class="t" style="left:433.3666666666667px;width:100px;top:318.68px;font-size:3.7px;color:rgba(0,0,0,0.8);text-align:center;filter:none;">28</div>
<div class="t" style="left:453.8333333333333px;width:100px;top:318.68px;font-size:3.7px;color:rgba(0,0,0,0.8);text-align:center;filter:none;">27</div>
<div class="t" style="left:474.29999999999995px;width:100px;top:318.68px;font-size:3.7px;color:rgba(0,0,0,0.8);text-align:center;filter:none;">28</div>
<div class="t" style="left:494.76666666666665px;width:100px;top:318.68px;font-size:3.7px;color:rgba(0,0,0,0.8);text-align:center;filter:none;">27</div>
<div class="t" style="left:208.23333333333335px;width:100px;top:325.15px;font-size:3.7px;color:rgba(0,0,0,0.8);text-align:center;filter:none;">27</div>
<div class="t" style="left:228.7px;width:100px;top:325.15px;font-size:3.7px;color:rgba(0,0,0,0.8);text-align:center;filter:none;">23</div>
<div class="t" style="left:249.16666666666669px;width:100px;top:325.15px;font-size:3.7px;color:rgba(0,0,0,0.8);text-align:center;filter:none;">31</div>
<div class="t" style="left:269.6333333333333px;width:100px;top:325.15px;font-size:3.7px;color:rgba(0,0,0,0.8);text-align:center;filter:none;">22</div>
<div class="t" style="left:290.1px;width:100px;top:325.15px;font-size:3.7px;color:rgba(0,0,0,0.8);text-align:center;filter:none;">26</div>
<div class="t" style="left:310.56666666666666px;width:100px;top:325.15px;font-size:3.7px;color:rgba(0,0,0,0.8);text-align:center;filter:none;">32</div>
<div class="t" style="left:331.0333333333333px;width:100px;top:325.15px;font-size:3.7px;color:rgba(0,0,0,0.8);text-align:center;filter:none;">27</div>
<div class="t" style="left:351.5px;width:100px;top:325.15px;font-size:3.7px;color:rgba(0,0,0,0.8);text-align:center;filter:none;">28</div>
<div class="t" style="left:371.9666666666667px;width:100px;top:325.15px;font-size:3.7px;color:rgba(0,0,0,0.8);text-align:center;filter:none;">23</div>
<div class="t" style="left:392.43333333333334px;width:100px;top:325.15px;font-size:3.7px;color:rgba(0,0,0,0.8);text-align:center;filter:none;">33</div>
<div class="t" style="left:412.9px;width:100px;top:325.15px;font-size:3.7px;color:rgba(0,0,0,0.8);text-align:center;filter:none;">47</div>
<div class="t" style="left:433.3666666666667px;width:100px;top:325.15px;font-size:3.7px;color:rgba(0,0,0,0.8);text-align:center;filter:none;">33</div>
<div class="t" style="left:453.8333333333333px;width:100px;top:325.15px;font-size:3.7px;color:rgba(0,0,0,0.8);text-align:center;filter:none;">37</div>
<div class="t" style="left:474.29999999999995px;width:100px;top:325.15px;font-size:3.7px;color:rgba(0,0,0,0.8);text-align:center;filter:none;">35</div>
<div class="t" style="left:494.76666666666665px;width:100px;top:325.15px;font-size:3.7px;color:rgba(0,0,0,0.8);text-align:center;filter:none;">32</div>
<div class="t" style="left:208.23333333333335px;width:100px;top:331.62px;font-size:3.7px;color:rgba(0,0,0,0.8);text-align:center;filter:none;">29</div>
<div class="t" style="left:228.7px;width:100px;top:331.62px;font-size:3.7px;color:rgba(0,0,0,0.8);text-align:center;filter:none;">29</div>
<div class="t" style="left:249.16666666666669px;width:100px;top:331.62px;font-size:3.7px;color:rgba(0,0,0,0.8);text-align:center;filter:none;">30</div>
<div class="t" style="left:269.6333333333333px;width:100px;top:331.62px;font-size:3.7px;color:rgba(0,0,0,0.8);text-align:center;filter:none;">30</div>
<div class="t" style="left:290.1px;width:100px;top:331.62px;font-size:3.7px;color:rgba(0,0,0,0.8);text-align:center;filter:none;">30</div>
<div class="t" style="left:310.56666666666666px;width:100px;top:331.62px;font-size:3.7px;color:rgba(0,0,0,0.8);text-align:center;filter:none;">30</div>
<div class="t" style="left:331.0333333333333px;width:100px;top:331.62px;font-size:3.7px;color:rgba(0,0,0,0.8);text-align:center;filter:none;">31</div>
<div class="t" style="left:351.5px;width:100px;top:331.62px;font-size:3.7px;color:rgba(0,0,0,0.8);text-align:center;filter:none;">31</div>
<div class="t" style="left:371.9666666666667px;width:100px;top:331.62px;font-size:3.7px;color:rgba(0,0,0,0.8);text-align:center;filter:none;">30</div>
<div class="t" style="left:392.43333333333334px;width:100px;top:331.62px;font-size:3.7px;color:rgba(0,0,0,0.8);text-align:center;filter:none;">30</div>
<div class="t" style="left:412.9px;width:100px;top:331.62px;font-size:3.7px;color:rgba(0,0,0,0.8);text-align:center;filter:none;">31</div>
<div class="t" style="left:433.3666666666667px;width:100px;top:331.62px;font-size:3.7px;color:rgba(0,0,0,0.8);text-align:center;filter:none;">31</div>
<div class="t" style="left:453.8333333333333px;width:100px;top:331.62px;font-size:3.7px;color:rgba(0,0,0,0.8);text-align:center;filter:none;">31</div>
<div class="t" style="left:474.29999999999995px;width:100px;top:331.62px;font-size:3.7px;color:rgba(0,0,0,0.8);text-align:center;filter:none;">31</div>
<div class="t" style="left:494.76666666666665px;width:100px;top:331.62px;font-size:3.7px;color:rgba(0,0,0,0.8);text-align:center;filter:none;">32</div>
<div class="t" style="left:208.23333333333335px;width:100px;top:338.09px;font-size:3.7px;color:rgba(0,0,0,0.8);text-align:center;filter:none;">34</div>
<div class="t" style="left:228.7px;width:100px;top:338.09px;font-size:3.7px;color:rgba(0,0,0,0.8);text-align:center;filter:none;">36</div>
<div class="t" style="left:249.16666666666669px;width:100px;top:338.09px;font-size:3.7px;color:rgba(0,0,0,0.8);text-align:center;filter:none;">35</div>
<div class="t" style="left:269.6333333333333px;width:100px;top:338.09px;font-size:3.7px;color:rgba(0,0,0,0.8);text-align:center;filter:none;">35</div>
<div class="t" style="left:290.1px;width:100px;top:338.09px;font-size:3.7px;color:rgba(0,0,0,0.8);text-align:center;filter:none;">35</div>
<div class="t" style="left:310.56666666666666px;width:100px;top:338.09px;font-size:3.7px;color:rgba(0,0,0,0.8);text-align:center;filter:none;">34</div>
<div class="t" style="left:331.0333333333333px;width:100px;top:338.09px;font-size:3.7px;color:rgba(0,0,0,0.8);text-align:center;filter:none;">33</div>
<div class="t" style="left:351.5px;width:100px;top:338.09px;font-size:3.7px;color:rgba(0,0,0,0.8);text-align:center;filter:none;">33</div>
<div class="t" style="left:371.9666666666667px;width:100px;top:338.09px;font-size:3.7px;color:rgba(0,0,0,0.8);text-align:center;filter:none;">33</div>
<div class="t" style="left:392.43333333333334px;width:100px;top:338.09px;font-size:3.7px;color:rgba(0,0,0,0.8);text-align:center;filter:none;">34</div>
<div class="t" style="left:412.9px;width:100px;top:338.09px;font-size:3.7px;color:rgba(0,0,0,0.8);text-align:center;filter:none;">33</div>
<div class="t" style="left:433.3666666666667px;width:100px;top:338.09px;font-size:3.7px;color:rgba(0,0,0,0.8);text-align:center;filter:none;">33</div>
<div class="t" style="left:453.8333333333333px;width:100px;top:338.09px;font-size:3.7px;color:rgba(0,0,0,0.8);text-align:center;filter:none;">33</div>
<div class="t" style="left:474.29999999999995px;width:100px;top:338.09px;font-size:3.7px;color:rgba(0,0,0,0.8);text-align:center;filter:none;">33</div>
<div class="t" style="left:494.76666666666665px;width:100px;top:338.09px;font-size:3.7px;color:rgba(0,0,0,0.8);text-align:center;filter:none;">34</div>
<div class="t" style="left:208.23333333333335px;width:100px;top:344.56px;font-size:3.7px;color:rgba(0,0,0,0.8);text-align:center;filter:none;">43</div>
<div class="t" style="left:228.7px;width:100px;top:344.56px;font-size:3.7px;color:rgba(0,0,0,0.8);text-align:center;filter:none;">54</div>
<div class="t" style="left:249.16666666666669px;width:100px;top:344.56px;font-size:3.7px;color:rgba(0,0,0,0.8);text-align:center;filter:none;">60</div>
<div class="t" style="left:269.6333333333333px;width:100px;top:344.56px;font-size:3.7px;color:rgba(0,0,0,0.8);text-align:center;filter:none;">53</div>
<div class="t" style="left:290.1px;width:100px;top:344.56px;font-size:3.7px;color:rgba(0,0,0,0.8);text-align:center;filter:none;">89</div>
<div class="t" style="left:310.56666666666666px;width:100px;top:344.56px;font-size:3.7px;color:rgba(0,0,0,0.8);text-align:center;filter:none;">53</div>
<div class="t" style="left:331.0333333333333px;width:100px;top:344.56px;font-size:3.7px;color:rgba(0,0,0,0.8);text-align:center;filter:none;">53</div>
<div class="t" style="left:351.5px;width:100px;top:344.56px;font-size:3.7px;color:rgba(0,0,0,0.8);text-align:center;filter:none;">49</div>
<div class="t" style="left:371.9666666666667px;width:100px;top:344.56px;font-size:3.7px;color:rgba(0,0,0,0.8);text-align:center;filter:none;">49</div>
<div class="t" style="left:392.43333333333334px;width:100px;top:344.56px;font-size:3.7px;color:rgba(0,0,0,0.8);text-align:center;filter:none;">47</div>
<div class="t" style="left:412.9px;width:100px;top:344.56px;font-size:3.7px;color:rgba(0,0,0,0.8);text-align:center;filter:none;">43</div>
<div class="t" style="left:433.3666666666667px;width:100px;top:344.56px;font-size:3.7px;color:rgba(0,0,0,0.8);text-align:center;filter:none;">53</div>
<div class="t" style="left:453.8333333333333px;width:100px;top:344.56px;font-size:3.7px;color:rgba(0,0,0,0.8);text-align:center;filter:none;">63</div>
<div class="t" style="left:474.29999999999995px;width:100px;top:344.56px;font-size:3.7px;color:rgba(0,0,0,0.8);text-align:center;filter:none;">53</div>
<div class="t" style="left:494.76666666666665px;width:100px;top:344.56px;font-size:3.7px;color:rgba(0,0,0,0.8);text-align:center;filter:none;">69</div>
<div class="t" style="left:208.23333333333335px;width:100px;top:351.03px;font-size:3.7px;color:rgba(0,0,0,0.8);text-align:center;filter:none;">55</div>
<div class="t" style="left:228.7px;width:100px;top:351.03px;font-size:3.7px;color:rgba(0,0,0,0.8);text-align:center;filter:none;">55</div>
<div class="t" style="left:249.16666666666669px;width:100px;top:351.03px;font-size:3.7px;color:rgba(0,0,0,0.8);text-align:center;filter:none;">46</div>
<div class="t" style="left:269.6333333333333px;width:100px;top:351.03px;font-size:3.7px;color:rgba(0,0,0,0.8);text-align:center;filter:none;">41</div>
<div class="t" style="left:290.1px;width:100px;top:351.03px;font-size:3.7px;color:rgba(0,0,0,0.8);text-align:center;filter:none;">46</div>
<div class="t" style="left:310.56666666666666px;width:100px;top:351.03px;font-size:3.7px;color:rgba(0,0,0,0.8);text-align:center;filter:none;">54</div>
<div class="t" style="left:331.0333333333333px;width:100px;top:351.03px;font-size:3.7px;color:rgba(0,0,0,0.8);text-align:center;filter:none;">136</div>
<div class="t" style="left:351.5px;width:100px;top:351.03px;font-size:3.7px;color:rgba(0,0,0,0.8);text-align:center;filter:none;">62</div>
<div class="t" style="left:371.9666666666667px;width:100px;top:351.03px;font-size:3.7px;color:rgba(0,0,0,0.8);text-align:center;filter:none;">42</div>
<div class="t" style="left:392.43333333333334px;width:100px;top:351.03px;font-size:3.7px;color:rgba(0,0,0,0.8);text-align:center;filter:none;">43</div>
<div class="t" style="left:412.9px;width:100px;top:351.03px;font-size:3.7px;color:rgba(0,0,0,0.8);text-align:center;filter:none;">61</div>
<div class="t" style="left:433.3666666666667px;width:100px;top:351.03px;font-size:3.7px;color:rgba(0,0,0,0.8);text-align:center;filter:none;">54</div>
<div class="t" style="left:453.8333333333333px;width:100px;top:351.03px;font-size:3.7px;color:rgba(0,0,0,0.8);text-align:center;filter:none;">40</div>
<div class="t" style="left:474.29999999999995px;width:100px;top:351.03px;font-size:3.7px;color:rgba(0,0,0,0.8);text-align:center;filter:none;">44</div>
<div class="t" style="left:494.76666666666665px;width:100px;top:351.03px;font-size:3.7px;color:rgba(0,0,0,0.8);text-align:center;filter:none;">50</div>
<div class="t" style="left:208.23333333333335px;width:100px;top:357.50px;font-size:3.7px;color:rgba(0,0,0,0.8);text-align:center;filter:none;">37</div>
<div class="t" style="left:228.7px;width:100px;top:357.50px;font-size:3.7px;color:rgba(0,0,0,0.8);text-align:center;filter:none;">37</div>
<div class="t" style="left:249.16666666666669px;width:100px;top:357.50px;font-size:3.7px;color:rgba(0,0,0,0.8);text-align:center;filter:none;">36</div>
<div class="t" style="left:269.6333333333333px;width:100px;top:357.50px;font-size:3.7px;color:rgba(0,0,0,0.8);text-align:center;filter:none;">36</div>
<div class="t" style="left:290.1px;width:100px;top:357.50px;font-size:3.7px;color:rgba(0,0,0,0.8);text-align:center;filter:none;">36</div>
<div class="t" style="left:310.56666666666666px;width:100px;top:357.50px;font-size:3.7px;color:rgba(0,0,0,0.8);text-align:center;filter:none;">36</div>
<div class="t" style="left:331.0333333333333px;width:100px;top:357.50px;font-size:3.7px;color:rgba(0,0,0,0.8);text-align:center;filter:none;">36</div>
<div class="t" style="left:351.5px;width:100px;top:357.50px;font-size:3.7px;color:rgba(0,0,0,0.8);text-align:center;filter:none;">36</div>
<div class="t" style="left:371.9666666666667px;width:100px;top:357.50px;font-size:3.7px;color:rgba(0,0,0,0.8);text-align:center;filter:none;">36</div>
<div class="t" style="left:392.43333333333334px;width:100px;top:357.50px;font-size:3.7px;color:rgba(0,0,0,0.8);text-align:center;filter:none;">36</div>
<div class="t" style="left:412.9px;width:100px;top:357.50px;font-size:3.7px;color:rgba(0,0,0,0.8);text-align:center;filter:none;">35</div>
<div class="t" style="left:433.3666666666667px;width:100px;top:357.50px;font-size:3.7px;color:rgba(0,0,0,0.8);text-align:center;filter:none;">36</div>
<div class="t" style="left:453.8333333333333px;width:100px;top:357.50px;font-size:3.7px;color:rgba(0,0,0,0.8);text-align:center;filter:none;">35</div>
<div class="t" style="left:474.29999999999995px;width:100px;top:357.50px;font-size:3.7px;color:rgba(0,0,0,0.8);text-align:center;filter:none;">36</div>
<div class="t" style="left:494.76666666666665px;width:100px;top:357.50px;font-size:3.7px;color:rgba(0,0,0,0.8);text-align:center;filter:none;">37</div>
<div class="t" style="left:208.23333333333335px;width:100px;top:363.97px;font-size:3.7px;color:rgba(0,0,0,0.8);text-align:center;filter:none;">21</div>
<div class="t" style="left:228.7px;width:100px;top:363.97px;font-size:3.7px;color:rgba(0,0,0,0.8);text-align:center;filter:none;">21</div>
<div class="t" style="left:249.16666666666669px;width:100px;top:363.97px;font-size:3.7px;color:rgba(0,0,0,0.8);text-align:center;filter:none;">21</div>
<div class="t" style="left:269.6333333333333px;width:100px;top:363.97px;font-size:3.7px;color:rgba(0,0,0,0.8);text-align:center;filter:none;">22</div>
<div class="t" style="left:290.1px;width:100px;top:363.97px;font-size:3.7px;color:rgba(0,0,0,0.8);text-align:center;filter:none;">21</div>
<div class="t" style="left:310.56666666666666px;width:100px;top:363.97px;font-size:3.7px;color:rgba(0,0,0,0.8);text-align:center;filter:none;">21</div>
<div class="t" style="left:331.0333333333333px;width:100px;top:363.97px;font-size:3.7px;color:rgba(0,0,0,0.8);text-align:center;filter:none;">21</div>
<div class="t" style="left:351.5px;width:100px;top:363.97px;font-size:3.7px;color:rgba(0,0,0,0.8);text-align:center;filter:none;">24</div>
<div class="t" style="left:371.9666666666667px;width:100px;top:363.97px;font-size:3.7px;color:rgba(0,0,0,0.8);text-align:center;filter:none;">23</div>
<div class="t" style="left:392.43333333333334px;width:100px;top:363.97px;font-size:3.7px;color:rgba(0,0,0,0.8);text-align:center;filter:none;">24</div>
<div class="t" style="left:412.9px;width:100px;top:363.97px;font-size:3.7px;color:rgba(0,0,0,0.8);text-align:center;filter:none;">23</div>
<div class="t" style="left:433.3666666666667px;width:100px;top:363.97px;font-size:3.7px;color:rgba(0,0,0,0.8);text-align:center;filter:none;">26</div>
<div class="t" style="left:453.8333333333333px;width:100px;top:363.97px;font-size:3.7px;color:rgba(0,0,0,0.8);text-align:center;filter:none;">23</div>
<div class="t" style="left:474.29999999999995px;width:100px;top:363.97px;font-size:3.7px;color:rgba(0,0,0,0.8);text-align:center;filter:none;">25</div>
<div class="t" style="left:494.76666666666665px;width:100px;top:363.97px;font-size:3.7px;color:rgba(0,0,0,0.8);text-align:center;filter:none;">21</div>
<div class="t" style="left:208.23333333333335px;width:100px;top:370.44px;font-size:3.7px;color:rgba(0,0,0,0.8);text-align:center;filter:none;">28</div>
<div class="t" style="left:228.7px;width:100px;top:370.44px;font-size:3.7px;color:rgba(0,0,0,0.8);text-align:center;filter:none;">28</div>
<div class="t" style="left:249.16666666666669px;width:100px;top:370.44px;font-size:3.7px;color:rgba(0,0,0,0.8);text-align:center;filter:none;">28</div>
<div class="t" style="left:269.6333333333333px;width:100px;top:370.44px;font-size:3.7px;color:rgba(0,0,0,0.8);text-align:center;filter:none;">27</div>
<div class="t" style="left:290.1px;width:100px;top:370.44px;font-size:3.7px;color:rgba(0,0,0,0.8);text-align:center;filter:none;">27</div>
<div class="t" style="left:310.56666666666666px;width:100px;top:370.44px;font-size:3.7px;color:rgba(0,0,0,0.8);text-align:center;filter:none;">27</div>
<div class="t" style="left:331.0333333333333px;width:100px;top:370.44px;font-size:3.7px;color:rgba(0,0,0,0.8);text-align:center;filter:none;">27</div>
<div class="t" style="left:351.5px;width:100px;top:370.44px;font-size:3.7px;color:rgba(0,0,0,0.8);text-align:center;filter:none;">28</div>
<div class="t" style="left:371.9666666666667px;width:100px;top:370.44px;font-size:3.7px;color:rgba(0,0,0,0.8);text-align:center;filter:none;">28</div>
<div class="t" style="left:392.43333333333334px;width:100px;top:370.44px;font-size:3.7px;color:rgba(0,0,0,0.8);text-align:center;filter:none;">27</div>
<div class="t" style="left:412.9px;width:100px;top:370.44px;font-size:3.7px;color:rgba(0,0,0,0.8);text-align:center;filter:none;">27</div>
<div class="t" style="left:433.3666666666667px;width:100px;top:370.44px;font-size:3.7px;color:rgba(0,0,0,0.8);text-align:center;filter:none;">28</div>
<div class="t" style="left:453.8333333333333px;width:100px;top:370.44px;font-size:3.7px;color:rgba(0,0,0,0.8);text-align:center;filter:none;">28</div>
<div class="t" style="left:474.29999999999995px;width:100px;top:370.44px;font-size:3.7px;color:rgba(0,0,0,0.8);text-align:center;filter:none;">28</div>
<div class="t" style="left:494.76666666666665px;width:100px;top:370.44px;font-size:3.7px;color:rgba(0,0,0,0.8);text-align:center;filter:none;">27</div>
<div class="t" style="right:353px;top:265.34px;font-size:4.3px;color:#e2e4e6;font-weight:normal;text-decoration:underline;text-decoration-color:rgba(220,222,224,0.45);text-decoration-thickness:0.3px;text-underline-offset:-0.15px;transform:scaleX(1.114);transform-origin:100% 50%;line-height:1.2">ΣΠΡΣΤΔΑΛΣ. ΡΤΗΣΓ.ΡΔΑΚΑ.ΝΟΜΕΙ</div>
<div class="t" style="right:353px;top:271.81px;font-size:4.3px;color:#e2e4e6;font-weight:normal;text-decoration:underline;text-decoration-color:rgba(220,222,224,0.45);text-decoration-thickness:0.3px;text-underline-offset:-0.15px;transform:scaleX(1.011);transform-origin:100% 50%;line-height:1.2">ΜΣΓΗΧΤ.ΣΑΝΤΚΑ.ΚΡΤΑΤΗ</div>
<div class="t" style="right:353px;top:278.28px;font-size:4.3px;color:#e2e4e6;font-weight:normal;text-decoration:underline;text-decoration-color:rgba(220,222,224,0.45);text-decoration-thickness:0.3px;text-underline-offset:-0.15px;transform:scaleX(0.941);transform-origin:100% 50%;line-height:1.2">ΜΟΛ.ΠΡΤΣΤΘΜΑΛ..ΔΣ.ΜΠΣ.ΜΕ.ΠΡΤΘ</div>
<div class="t" style="right:353px;top:284.75px;font-size:4.3px;color:#e2e4e6;font-weight:normal;text-decoration:underline;text-decoration-color:rgba(220,222,224,0.45);text-decoration-thickness:0.3px;text-underline-offset:-0.15px;transform:scaleX(0.981);transform-origin:100% 50%;line-height:1.2">ΜΟΛ.ΠΡΤΣΤΘΜΑΛ..ΚΠΜΕ.ΠΡΤΘ</div>
<div class="t" style="right:353px;top:291.22px;font-size:4.3px;color:#e2e4e6;font-weight:normal;text-decoration:underline;text-decoration-color:rgba(220,222,224,0.45);text-decoration-thickness:0.3px;text-underline-offset:-0.15px;transform:scaleX(0.951);transform-origin:100% 50%;line-height:1.2">ΜΕΓ.ΠΡΤΑΓ.ΔΑΤΕ</div>
<div class="t" style="right:353px;top:297.69px;font-size:4.3px;color:#e2e4e6;font-weight:normal;text-decoration:underline;text-decoration-color:rgba(220,222,224,0.45);text-decoration-thickness:0.3px;text-underline-offset:-0.15px;transform:scaleX(1.174);transform-origin:100% 50%;line-height:1.2">ΔΑΔ ΔΑΤΥΤΥΑ.Δ</div>
<div class="t" style="right:353px;top:304.16px;font-size:4.3px;color:#e2e4e6;font-weight:normal;text-decoration:underline;text-decoration-color:rgba(220,222,224,0.45);text-decoration-thickness:0.3px;text-underline-offset:-0.15px;transform:scaleX(1.174);transform-origin:100% 50%;line-height:1.2">ΔΑΔ ΔΑΤΥΤΥΑ.Δ</div>
<div class="t" style="right:353px;top:310.63px;font-size:4.3px;color:#e2e4e6;font-weight:normal;text-decoration:underline;text-decoration-color:rgba(220,222,224,0.45);text-decoration-thickness:0.3px;text-underline-offset:-0.15px;transform:scaleX(1.174);transform-origin:100% 50%;line-height:1.2">ΔΑΔ ΔΑΤΥΤΥΑ.Δ</div>
<div class="t" style="right:353px;top:317.10px;font-size:4.3px;color:#e2e4e6;font-weight:normal;text-decoration:underline;text-decoration-color:rgba(220,222,224,0.45);text-decoration-thickness:0.3px;text-underline-offset:-0.15px;transform:scaleX(1.174);transform-origin:100% 50%;line-height:1.2">ΔΑΔ ΔΑΤΥΤΥΑ.Δ</div>
<div class="t" style="right:353px;top:323.57px;font-size:4.3px;color:#e2e4e6;font-weight:normal;text-decoration:underline;text-decoration-color:rgba(220,222,224,0.45);text-decoration-thickness:0.3px;text-underline-offset:-0.15px;transform:scaleX(1.174);transform-origin:100% 50%;line-height:1.2">ΔΑΔ ΔΑΤΥΤΥΑ.Δ</div>
<div class="t" style="right:353px;top:330.04px;font-size:4.3px;color:#e2e4e6;font-weight:normal;text-decoration:underline;text-decoration-color:rgba(220,222,224,0.45);text-decoration-thickness:0.3px;text-underline-offset:-0.15px;transform:scaleX(1.174);transform-origin:100% 50%;line-height:1.2">ΔΑΔ ΔΑΤΥΤΥΑ.Δ</div>
<div class="t" style="right:353px;top:336.51px;font-size:4.3px;color:#e2e4e6;font-weight:normal;text-decoration:underline;text-decoration-color:rgba(220,222,224,0.45);text-decoration-thickness:0.3px;text-underline-offset:-0.15px;transform:scaleX(1.174);transform-origin:100% 50%;line-height:1.2">ΔΑΔ ΔΑΤΥΤΥΑ.Δ</div>
<div class="t" style="right:353px;top:342.98px;font-size:4.3px;color:#e2e4e6;font-weight:normal;text-decoration:underline;text-decoration-color:rgba(220,222,224,0.45);text-decoration-thickness:0.3px;text-underline-offset:-0.15px;transform:scaleX(1.174);transform-origin:100% 50%;line-height:1.2">ΔΑΔ ΔΑΤΥΤΥΑ.Δ</div>
<div class="t" style="right:353px;top:349.45px;font-size:4.3px;color:#e2e4e6;font-weight:normal;text-decoration:underline;text-decoration-color:rgba(220,222,224,0.45);text-decoration-thickness:0.3px;text-underline-offset:-0.15px;transform:scaleX(1.174);transform-origin:100% 50%;line-height:1.2">ΔΑΔ ΔΑΤΥΤΥΑ.Δ</div>
<div class="t" style="right:353px;top:355.92px;font-size:4.3px;color:#e2e4e6;font-weight:normal;text-decoration:underline;text-decoration-color:rgba(220,222,224,0.45);text-decoration-thickness:0.3px;text-underline-offset:-0.15px;transform:scaleX(1.174);transform-origin:100% 50%;line-height:1.2">ΔΑΔ ΔΑΤΥΤΥΑ.Δ</div>
<div class="t" style="right:353px;top:362.39px;font-size:4.3px;color:#e2e4e6;font-weight:normal;text-decoration:underline;text-decoration-color:rgba(220,222,224,0.45);text-decoration-thickness:0.3px;text-underline-offset:-0.15px;transform:scaleX(1.006);transform-origin:100% 50%;line-height:1.2">ΠΑΛΛΤΡ</div>
<div class="t" style="right:353px;top:368.86px;font-size:4.3px;color:#e2e4e6;font-weight:normal;text-decoration:underline;text-decoration-color:rgba(220,222,224,0.45);text-decoration-thickness:0.3px;text-underline-offset:-0.15px;transform:scaleX(0.918);transform-origin:100% 50%;line-height:1.2">ΛΑΣΤΑΡΑΠΡ.ΠΡΤΣ.ΡΤ</div>
<div class="t" style="left:248.10px;top:376.8px;font-size:3.5px;line-height:4.2px;color:#9a9ea2;writing-mode:vertical-rl;">11/13/2023, 7:00:00 AM</div>
<div class="t" style="left:268.57px;top:376.8px;font-size:3.5px;line-height:4.2px;color:#9a9ea2;writing-mode:vertical-rl;">11/13/2023, 8:00:00 AM</div>
<div class="t" style="left:289.03px;top:376.8px;font-size:3.5px;line-height:4.2px;color:#9a9ea2;writing-mode:vertical-rl;">11/13/2023, 9:00:00 AM</div>
<div class="t" style="left:309.50px;top:376.8px;font-size:3.5px;line-height:4.2px;color:#9a9ea2;writing-mode:vertical-rl;">11/13/2023, 10:00:00 AM</div>
<div class="t" style="left:329.97px;top:376.8px;font-size:3.5px;line-height:4.2px;color:#9a9ea2;writing-mode:vertical-rl;">11/13/2023, 11:00:00 AM</div>
<div class="t" style="left:350.43px;top:376.8px;font-size:3.5px;line-height:4.2px;color:#9a9ea2;writing-mode:vertical-rl;">11/13/2023, 12:00:00 PM</div>
<div class="t" style="left:370.90px;top:376.8px;font-size:3.5px;line-height:4.2px;color:#9a9ea2;writing-mode:vertical-rl;">11/13/2023, 1:00:00 PM</div>
<div class="t" style="left:391.37px;top:376.8px;font-size:3.5px;line-height:4.2px;color:#9a9ea2;writing-mode:vertical-rl;">11/13/2023, 2:00:00 PM</div>
<div class="t" style="left:411.83px;top:376.8px;font-size:3.5px;line-height:4.2px;color:#9a9ea2;writing-mode:vertical-rl;">11/13/2023, 3:00:00 PM</div>
<div class="t" style="left:432.30px;top:376.8px;font-size:3.5px;line-height:4.2px;color:#9a9ea2;writing-mode:vertical-rl;">11/13/2023, 4:00:00 PM</div>
<div class="t" style="left:452.77px;top:376.8px;font-size:3.5px;line-height:4.2px;color:#9a9ea2;writing-mode:vertical-rl;">11/13/2023, 5:00:00 PM</div>
<div class="t" style="left:473.23px;top:376.8px;font-size:3.5px;line-height:4.2px;color:#9a9ea2;writing-mode:vertical-rl;">11/13/2023, 6:00:00 PM</div>
<div class="t" style="left:493.70px;top:376.8px;font-size:3.5px;line-height:4.2px;color:#9a9ea2;writing-mode:vertical-rl;">11/13/2023, 7:00:00 PM</div>
<div class="t" style="left:514.17px;top:376.8px;font-size:3.5px;line-height:4.2px;color:#9a9ea2;writing-mode:vertical-rl;">11/13/2023, 8:00:00 PM</div>
<div class="t" style="left:534.63px;top:376.8px;font-size:3.5px;line-height:4.2px;color:#9a9ea2;writing-mode:vertical-rl;">11/13/2023, 9:00:00 PM</div>
</body></html>
